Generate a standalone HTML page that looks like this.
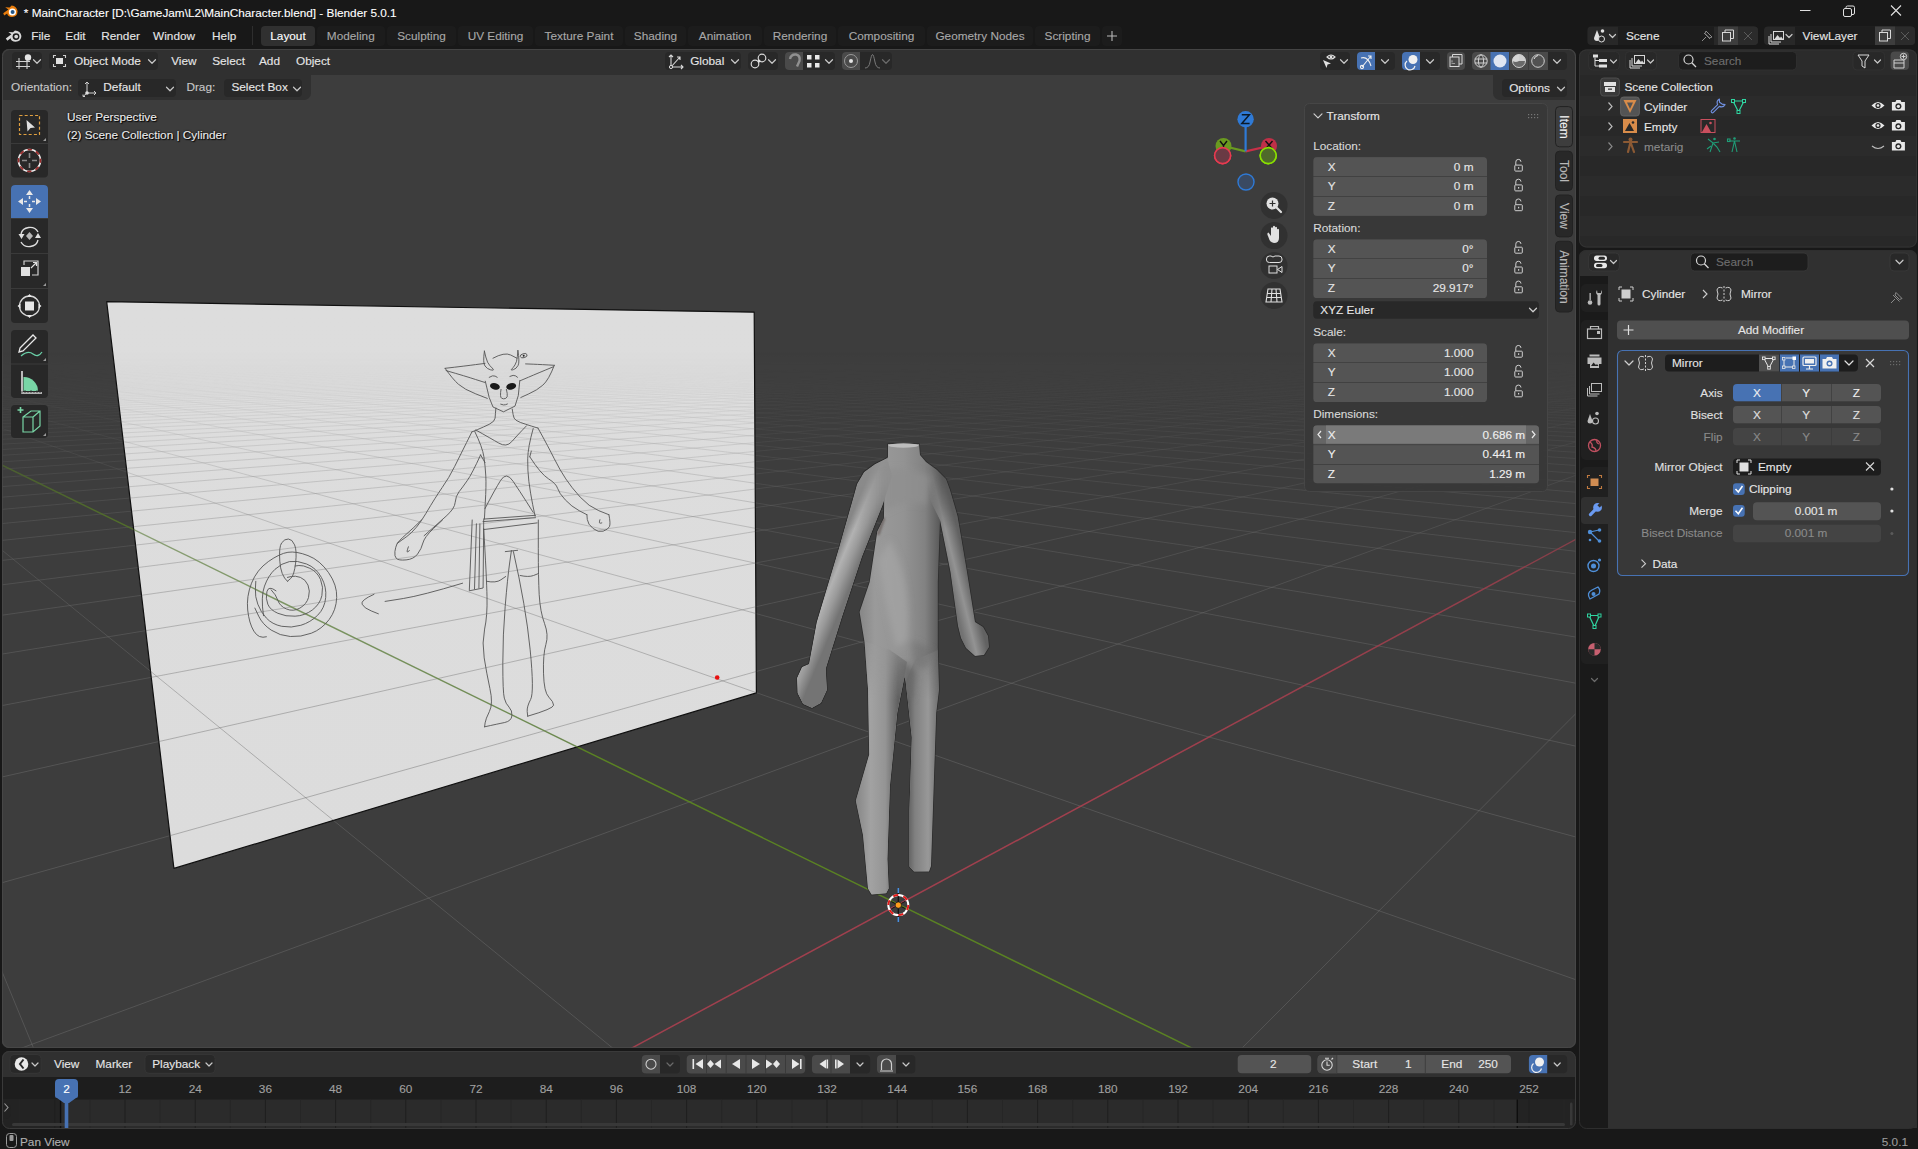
<!DOCTYPE html><html><head><meta charset="utf-8"><style>
*{margin:0;padding:0;box-sizing:border-box}
html,body{width:1918px;height:1149px;overflow:hidden;background:#181818}
body{position:relative;font-family:"Liberation Sans", sans-serif}
div,span,svg{position:absolute}
.t{white-space:pre;line-height:1;-webkit-text-stroke:0.12px currentColor}
.tc{text-align:center}
</style></head><body><div style="left:0px;top:0px;width:1918px;height:24px;background:#181818;"></div>
<svg style="left:2px;top:4px;" width="17" height="14" viewBox="0 0 17 14">
      <path d="M1.2 9.2 L6.4 5.4 L3.2 3.2 L7.6 3.4 L9.6 1.6 Q14.6 2.2 15.6 7.2 Q15.4 12.6 10 13 Q5.6 12.8 5.2 9.4 L2.2 11.6 Z" fill="#e87d0d"/>
      <circle cx="10.4" cy="8" r="3.6" fill="#fff"/>
      <circle cx="10.6" cy="8" r="2" fill="#265787"/></svg>
<span class="t" style="left:23.8px;top:6.7px;font-size:11.77px;color:#ffffff;">* MainCharacter [D:\GameJam\L2\MainCharacter.blend] - Blender 5.0.1</span>
<svg style="left:1796px;top:4px;" width="16" height="16" viewBox="0 0 16 16"><path d="M4 6.5 H14.5" stroke="#e0e0e0" stroke-width="1"/></svg>
<svg style="left:1841px;top:3px;" width="16" height="16" viewBox="0 0 16 16"><rect x="2.5" y="5.5" width="8" height="8" rx="1.5" fill="none" stroke="#e0e0e0" stroke-width="1"/><path d="M5 5.5 V4.5 Q5 3 6.5 3 H12 Q13.5 3 13.5 4.5 V10 Q13.5 11.5 12 11.5 H10.5" fill="none" stroke="#e0e0e0" stroke-width="1"/></svg>
<svg style="left:1887px;top:3px;" width="16" height="16" viewBox="0 0 16 16"><path d="M4 2.5 L14 12.5 M14 2.5 L4 12.5" stroke="#e0e0e0" stroke-width="1.1"/></svg>
<div style="left:0px;top:24px;width:1918px;height:25px;background:#181818;"></div>
<svg style="left:5px;top:28px;" width="18" height="15" viewBox="0 0 18 15">
      <path d="M0.8 10.4 L6.4 6.2 L3.4 4 L8 4.2 L10 2.4 Q15.6 2.8 16.4 8 Q16.2 13.4 10.6 13.8 Q6 13.6 5.6 10.2 L2.4 12.8 Z" fill="#d8d8d8"/>
      <circle cx="11" cy="8.6" r="3.4" fill="#181818"/>
      <circle cx="11.2" cy="8.6" r="1.9" fill="#d8d8d8"/></svg>
<span class="t" style="left:31.3px;top:31.0px;font-size:11.8px;color:#e6e6e6;">File</span>
<span class="t" style="left:65.3px;top:31.0px;font-size:11.8px;color:#e6e6e6;">Edit</span>
<span class="t" style="left:101.2px;top:31.0px;font-size:11.8px;color:#e6e6e6;">Render</span>
<span class="t" style="left:153.1px;top:31.0px;font-size:11.8px;color:#e6e6e6;">Window</span>
<span class="t" style="left:212.1px;top:31.0px;font-size:11.8px;color:#e6e6e6;">Help</span>
<div style="left:252px;top:26px;width:1px;height:19px;background:#2e2e2e;"></div>
<div style="left:261px;top:26px;width:54px;height:20px;background:#303030;border-radius:4px;"></div>
<span class="t tc" style="left:-12.0px;width:600px;top:31.0px;font-size:11.8px;color:#ffffff;">Layout</span>
<div style="left:316.5px;top:26px;width:68.5px;height:20px;background:#1c1c1c;border-radius:4px;"></div>
<span class="t tc" style="left:50.8px;width:600px;top:31.0px;font-size:11.8px;color:#a8a8a8;">Modeling</span>
<div style="left:387px;top:26px;width:69px;height:20px;background:#1c1c1c;border-radius:4px;"></div>
<span class="t tc" style="left:121.5px;width:600px;top:31.0px;font-size:11.8px;color:#a8a8a8;">Sculpting</span>
<div style="left:458px;top:26px;width:75px;height:20px;background:#1c1c1c;border-radius:4px;"></div>
<span class="t tc" style="left:195.5px;width:600px;top:31.0px;font-size:11.8px;color:#a8a8a8;">UV Editing</span>
<div style="left:535px;top:26px;width:88px;height:20px;background:#1c1c1c;border-radius:4px;"></div>
<span class="t tc" style="left:279.0px;width:600px;top:31.0px;font-size:11.8px;color:#a8a8a8;">Texture Paint</span>
<div style="left:625px;top:26px;width:61px;height:20px;background:#1c1c1c;border-radius:4px;"></div>
<span class="t tc" style="left:355.5px;width:600px;top:31.0px;font-size:11.8px;color:#a8a8a8;">Shading</span>
<div style="left:688px;top:26px;width:74px;height:20px;background:#1c1c1c;border-radius:4px;"></div>
<span class="t tc" style="left:425.0px;width:600px;top:31.0px;font-size:11.8px;color:#a8a8a8;">Animation</span>
<div style="left:764px;top:26px;width:72px;height:20px;background:#1c1c1c;border-radius:4px;"></div>
<span class="t tc" style="left:500.0px;width:600px;top:31.0px;font-size:11.8px;color:#a8a8a8;">Rendering</span>
<div style="left:838px;top:26px;width:87px;height:20px;background:#1c1c1c;border-radius:4px;"></div>
<span class="t tc" style="left:581.5px;width:600px;top:31.0px;font-size:11.8px;color:#a8a8a8;">Compositing</span>
<div style="left:927px;top:26px;width:106px;height:20px;background:#1c1c1c;border-radius:4px;"></div>
<span class="t tc" style="left:680.0px;width:600px;top:31.0px;font-size:11.8px;color:#a8a8a8;">Geometry Nodes</span>
<div style="left:1035px;top:26px;width:65px;height:20px;background:#1c1c1c;border-radius:4px;"></div>
<span class="t tc" style="left:767.5px;width:600px;top:31.0px;font-size:11.8px;color:#a8a8a8;">Scripting</span>
<div style="left:1102px;top:26px;width:20px;height:20px;background:#1c1c1c;border-radius:4px;"></div>
<svg style="left:1106px;top:30px;" width="12" height="12" viewBox="0 0 12 12"><path d="M6 1 V11 M1 6 H11" stroke="#b8b8b8" stroke-width="1.1"/></svg>
<div style="left:2px;top:49px;width:1573px;height:999px;background:#3d3d3d;border-radius:7px;overflow:hidden"></div>
<svg style="left:2px;top:49px;" width="1574" height="999" viewBox="0 0 1574 999">
    <defs>
      <clipPath id="vclip"><rect x="0" y="0" width="1574" height="999" rx="7"/></clipPath>
      <linearGradient id="gfade" gradientUnits="userSpaceOnUse" x1="0" y1="287.7" x2="0" y2="999">
<stop offset="0.0000" stop-color="#fff" stop-opacity="0"/><stop offset="0.0197" stop-color="#fff" stop-opacity="0.0"/><stop offset="0.0422" stop-color="#fff" stop-opacity="0.02"/><stop offset="0.0633" stop-color="#fff" stop-opacity="0.06"/><stop offset="0.0844" stop-color="#fff" stop-opacity="0.14"/><stop offset="0.1265" stop-color="#fff" stop-opacity="0.3"/><stop offset="0.1687" stop-color="#fff" stop-opacity="0.45"/><stop offset="0.2531" stop-color="#fff" stop-opacity="0.68"/><stop offset="0.3655" stop-color="#fff" stop-opacity="0.85"/><stop offset="0.5905" stop-color="#fff" stop-opacity="1"/><stop offset="1.0000" stop-color="#fff" stop-opacity="1"/>
      </linearGradient>
      <mask id="gmask" maskUnits="userSpaceOnUse" x="0" y="0" width="1574" height="999"><rect x="0" y="0" width="1574" height="999" fill="url(#gfade)"/></mask>
      <linearGradient id="plg" x1="0" y1="0" x2="0" y2="1"><stop offset="0" stop-color="#dddddd"/><stop offset="1" stop-color="#dcdcdc"/></linearGradient>
    </defs>
    <g clip-path="url(#vclip)">
      <rect width="1574" height="999" fill="#3d3d3d"/>
      <g mask="url(#gmask)">
        <path id="gridp" d="M-740773.7 6454.3L-25735.3 499.8M-735753.1 6454.3L-23730.0 484.5M-730732.4 6454.3L-21995.6 471.2M-725711.8 6454.3L-20480.6 459.6M-720691.1 6454.3L-19146.0 449.4M762713.6 6454.3L344198.8 3061.9M-715670.5 6454.3L-17961.2 440.3M757424.5 6454.3L165676.9 1624.1M-710649.9 6454.3L-16902.4 432.2M752135.4 6454.3L109033.1 1167.9M-705629.2 6454.3L-15950.6 424.9M746846.3 6454.3L81219.3 943.9M-700608.6 6454.3L-15090.2 418.3M741557.2 6454.3L64690.0 810.8M-695587.9 6454.3L-14308.8 412.3M736268.1 6454.3L53736.0 722.6M-690567.3 6454.3L-13595.9 406.8M730979.1 6454.3L45943.6 659.8M-685546.7 6454.3L-12942.8 401.8M725690.0 6454.3L40116.6 612.9M-680526.0 6454.3L-12342.5 397.2M720400.9 6454.3L35594.7 576.5M-675505.4 6454.3L-11788.6 393.0M715111.8 6454.3L31983.6 547.4M-670484.7 6454.3L-11276.1 389.1M709822.7 6454.3L29033.3 523.7M-665464.1 6454.3L-10800.5 385.4M704533.6 6454.3L26577.6 503.9M-660443.5 6454.3L-10357.8 382.0M699244.5 6454.3L24501.8 487.2M-655422.8 6454.3L-9944.9 378.9M693955.4 6454.3L22724.0 472.8M-650402.2 6454.3L-9558.8 375.9M688666.4 6454.3L21184.4 460.4M-645381.5 6454.3L-9196.9 373.1M683377.3 6454.3L19838.1 449.6M-640360.9 6454.3L-8857.2 370.5M678088.2 6454.3L18650.8 440.0M-635340.3 6454.3L-8537.5 368.1M672799.1 6454.3L17596.0 431.5M-630319.6 6454.3L-8236.2 365.8M667510.0 6454.3L16652.6 423.9M-625299.0 6454.3L-7951.7 363.6M662220.9 6454.3L15803.9 417.1M-620278.4 6454.3L-7682.7 361.5M656931.8 6454.3L15036.3 410.9M-615257.7 6454.3L-7427.9 359.6M651642.8 6454.3L14338.7 405.3M-610237.1 6454.3L-7186.2 357.7M646353.7 6454.3L13701.9 400.2M-605216.4 6454.3L-6956.7 356.0M641064.6 6454.3L13118.4 395.5M-600195.8 6454.3L-6738.4 354.3M635775.5 6454.3L12581.6 391.2M-595175.2 6454.3L-6530.6 352.7M630486.4 6454.3L12086.3 387.2M-590154.5 6454.3L-6332.5 351.2M625197.3 6454.3L11627.8 383.5M-585133.9 6454.3L-6143.4 349.7M619908.2 6454.3L11202.1 380.0M-580113.2 6454.3L-5962.8 348.3M614619.1 6454.3L10805.8 376.9M-575092.6 6454.3L-5790.1 347.0M609330.1 6454.3L10436.0 373.9M-570072.0 6454.3L-5624.7 345.8M604041.0 6454.3L10090.2 371.1M-565051.3 6454.3L-5466.3 344.5M598751.9 6454.3L9765.9 368.5M-560030.7 6454.3L-5314.3 343.4M593462.8 6454.3L9461.4 366.0M-555010.0 6454.3L-5168.4 342.3M588173.7 6454.3L9174.8 363.7M-549989.4 6454.3L-5028.3 341.2M582884.6 6454.3L8904.7 361.5M-544968.8 6454.3L-4893.6 340.2M577595.5 6454.3L8649.6 359.5M-539948.1 6454.3L-4764.0 339.2M572306.4 6454.3L8408.3 357.5M-534927.5 6454.3L-4639.3 338.2M567017.4 6454.3L8179.7 355.7M-529906.8 6454.3L-4519.0 337.3M561728.3 6454.3L7962.8 354.0M-524886.2 6454.3L-4403.1 336.4M556439.2 6454.3L7756.8 352.3M-519865.6 6454.3L-4291.3 335.5M551150.1 6454.3L7560.9 350.7M-514844.9 6454.3L-4183.3 334.7M545861.0 6454.3L7374.4 349.2M-509824.3 6454.3L-4079.0 333.9M540571.9 6454.3L7196.5 347.8M-504803.6 6454.3L-3978.2 333.1M535282.8 6454.3L7026.7 346.4M-499783.0 6454.3L-3880.7 332.4M529993.7 6454.3L6864.5 345.1M-494762.4 6454.3L-3786.4 331.7M524704.7 6454.3L6709.3 343.9M-489741.7 6454.3L-3695.0 331.0M519415.6 6454.3L6560.8 342.7M-484721.1 6454.3L-3606.6 330.3M514126.5 6454.3L6418.4 341.5M-479700.4 6454.3L-3520.8 329.6M508837.4 6454.3L6281.9 340.4M-474679.8 6454.3L-3437.7 329.0M503548.3 6454.3L6150.9 339.4M-469659.2 6454.3L-3357.1 328.4M498259.2 6454.3L6024.9 338.3M-464638.5 6454.3L-3278.8 327.8M492970.1 6454.3L5903.9 337.4M-459617.9 6454.3L-3202.8 327.2M487681.0 6454.3L5787.4 336.4M-454597.2 6454.3L-3129.0 326.6M482392.0 6454.3L5675.2 335.5M-449576.6 6454.3L-3057.3 326.1M477102.9 6454.3L5567.1 334.7M-444556.0 6454.3L-2987.5 325.5M471813.8 6454.3L5462.9 333.8M-439535.3 6454.3L-2919.7 325.0M466524.7 6454.3L5362.4 333.0M-434514.7 6454.3L-2853.7 324.5M461235.6 6454.3L5265.3 332.2M-429494.0 6454.3L-2789.5 324.0M455946.5 6454.3L5171.5 331.5M-424473.4 6454.3L-2727.0 323.6M450657.4 6454.3L5080.8 330.7M-419452.8 6454.3L-2666.1 323.1M445368.4 6454.3L4993.1 330.0M-414432.1 6454.3L-2606.8 322.6M440079.3 6454.3L4908.3 329.4M-409411.5 6454.3L-2548.9 322.2M434790.2 6454.3L4826.1 328.7M-404390.9 6454.3L-2492.6 321.8M429501.1 6454.3L4746.5 328.1M-399370.2 6454.3L-2437.6 321.3M424212.0 6454.3L4669.4 327.4M-394349.6 6454.3L-2384.0 320.9M418922.9 6454.3L4594.6 326.8M-389328.9 6454.3L-2331.6 320.5M413633.8 6454.3L4522.0 326.2M-384308.3 6454.3L-2280.5 320.1M408344.7 6454.3L4451.6 325.7M-379287.7 6454.3L-2230.7 319.7M403055.7 6454.3L4383.2 325.1M-374267.0 6454.3L-2181.9 319.4M397766.6 6454.3L4316.8 324.6M-369246.4 6454.3L-2134.3 319.0M392477.5 6454.3L4252.3 324.1M-364225.7 6454.3L-2087.8 318.7M387188.4 6454.3L4189.5 323.6M-359205.1 6454.3L-2042.4 318.3M381899.3 6454.3L4128.5 323.1M-354184.5 6454.3L-1997.9 318.0M376610.2 6454.3L4069.1 322.6M-349163.8 6454.3L-1954.4 317.6M371321.1 6454.3L4011.3 322.1M-344143.2 6454.3L-1911.9 317.3M366032.0 6454.3L3955.0 321.7M-339122.5 6454.3L-1870.3 317.0M360743.0 6454.3L3900.2 321.2M-334101.9 6454.3L-1829.6 316.7M355453.9 6454.3L3846.8 320.8M-329081.3 6454.3L-1789.7 316.4M350164.8 6454.3L3794.7 320.4M-324060.6 6454.3L-1750.7 316.1M344875.7 6454.3L3744.0 320.0M-319040.0 6454.3L-1712.4 315.8M339586.6 6454.3L3694.5 319.6M-314019.3 6454.3L-1675.0 315.5M334297.5 6454.3L3646.2 319.2M-308998.7 6454.3L-1638.3 315.2M329008.4 6454.3L3599.1 318.8M-303978.1 6454.3L-1602.4 314.9M323719.3 6454.3L3553.1 318.4M-298957.4 6454.3L-1567.1 314.7M318430.3 6454.3L3508.2 318.1M-293936.8 6454.3L-1532.6 314.4M313141.2 6454.3L3464.3 317.7M-288916.1 6454.3L-1498.7 314.1M307852.1 6454.3L3421.4 317.4M-283895.5 6454.3L-1465.5 313.9M302563.0 6454.3L3379.5 317.0M-278874.9 6454.3L-1432.9 313.6M297273.9 6454.3L3338.6 316.7M-273854.2 6454.3L-1400.9 313.4M291984.8 6454.3L3298.5 316.4M-268833.6 6454.3L-1369.5 313.1M286695.7 6454.3L3259.4 316.1M-263812.9 6454.3L-1338.7 312.9M281406.6 6454.3L3221.1 315.8M-258792.3 6454.3L-1308.5 312.7M276117.6 6454.3L3183.6 315.5M-253771.7 6454.3L-1278.8 312.5M270828.5 6454.3L3146.9 315.2M-248751.0 6454.3L-1249.7 312.2M265539.4 6454.3L3111.0 314.9M-243730.4 6454.3L-1221.1 312.0M260250.3 6454.3L3075.9 314.6M-238709.7 6454.3L-1193.0 311.8M254961.2 6454.3L3041.4 314.3M-233689.1 6454.3L-1165.4 311.6M249672.1 6454.3L3007.7 314.0M-228668.5 6454.3L-1138.2 311.4M244383.0 6454.3L2974.6 313.8M-223647.8 6454.3L-1111.6 311.2M239094.0 6454.3L2942.3 313.5M-218627.2 6454.3L-1085.4 311.0M233804.9 6454.3L2910.5 313.3M-213606.6 6454.3L-1059.6 310.8M228515.8 6454.3L2879.4 313.0M-208585.9 6454.3L-1034.3 310.6M223226.7 6454.3L2848.9 312.8M-203565.3 6454.3L-1009.4 310.4M217937.6 6454.3L2818.9 312.5M-198544.6 6454.3L-984.9 310.2M212648.5 6454.3L2789.6 312.3M-193524.0 6454.3L-960.8 310.0M207359.4 6454.3L2760.8 312.1M-188503.4 6454.3L-937.1 309.8M202070.3 6454.3L2732.5 311.8M-183482.7 6454.3L-913.7 309.7M196781.3 6454.3L2704.8 311.6M-178462.1 6454.3L-890.8 309.5M191492.2 6454.3L2677.5 311.4M-173441.4 6454.3L-868.2 309.3M186203.1 6454.3L2650.8 311.2M-168420.8 6454.3L-846.0 309.1M180914.0 6454.3L2624.5 311.0M-163400.2 6454.3L-824.1 309.0M175624.9 6454.3L2598.8 310.8M-158379.5 6454.3L-802.6 308.8M170335.8 6454.3L2573.4 310.5M-153358.9 6454.3L-781.4 308.6M165046.7 6454.3L2548.5 310.3M-148338.2 6454.3L-760.5 308.5M159757.6 6454.3L2524.1 310.2M-143317.6 6454.3L-739.9 308.3M154468.6 6454.3L2500.1 310.0M-138297.0 6454.3L-719.7 308.2M149179.5 6454.3L2476.4 309.8M-133276.3 6454.3L-699.7 308.0M143890.4 6454.3L2453.2 309.6M-128255.7 6454.3L-680.1 307.9M138601.3 6454.3L2430.4 309.4M-123235.0 6454.3L-660.7 307.7M133312.2 6454.3L2407.9 309.2M-118214.4 6454.3L-641.6 307.6M128023.1 6454.3L2385.9 309.0M-113193.8 6454.3L-622.8 307.4M122734.0 6454.3L2364.1 308.9M-108173.1 6454.3L-604.3 307.3M117444.9 6454.3L2342.8 308.7M-103152.5 6454.3L-586.0 307.1M112155.9 6454.3L2321.8 308.5M-98131.8 6454.3L-568.0 307.0M106866.8 6454.3L2301.1 308.4M-93111.2 6454.3L-550.2 306.9M101577.7 6454.3L2280.7 308.2M-88090.6 6454.3L-532.7 306.7M96288.6 6454.3L2260.7 308.0M-83069.9 6454.3L-515.5 306.6M90999.5 6454.3L2241.0 307.9M-78049.3 6454.3L-498.4 306.5M85710.4 6454.3L2221.6 307.7M-73028.6 6454.3L-481.7 306.3M80421.3 6454.3L2202.5 307.6M-68008.0 6454.3L-465.1 306.2M75132.2 6454.3L2183.6 307.4M-62987.4 6454.3L-448.8 306.1M69843.2 6454.3L2165.1 307.3M-57966.7 6454.3L-432.6 306.0M64554.1 6454.3L2146.8 307.1M-52946.1 6454.3L-416.7 305.8M59265.0 6454.3L2128.9 307.0M-47925.4 6454.3L-401.0 305.7M53975.9 6454.3L2111.1 306.8M-42904.8 6454.3L-385.6 305.6M48686.8 6454.3L2093.7 306.7M-37884.2 6454.3L-370.3 305.5M43397.7 6454.3L2076.5 306.5M-32863.5 6454.3L-355.2 305.4M38108.6 6454.3L2059.5 306.4M-27842.9 6454.3L-340.3 305.3M32819.5 6454.3L2042.8 306.3M-22822.3 6454.3L-325.6 305.2M27530.5 6454.3L2026.4 306.1M-17801.6 6454.3L-311.1 305.0M22241.4 6454.3L2010.1 306.0M-12781.0 6454.3L-296.8 304.9M16952.3 6454.3L1994.1 305.9M-7760.3 6454.3L-282.6 304.8M11663.2 6454.3L1978.3 305.8M-2739.7 6454.3L-268.6 304.7M6374.1 6454.3L1962.8 305.6M2280.9 6454.3L-254.8 304.6M1085.0 6454.3L1947.4 305.5M7301.6 6454.3L-241.2 304.5M-4204.1 6454.3L1932.3 305.4M17342.9 6454.3L-214.5 304.3M-14782.2 6454.3L1902.6 305.1M22363.5 6454.3L-201.3 304.2M-20071.3 6454.3L1888.1 305.0M27384.1 6454.3L-188.4 304.1M-25360.4 6454.3L1873.7 304.9M32404.8 6454.3L-175.5 304.0M-30649.5 6454.3L1859.6 304.8M37425.4 6454.3L-162.9 303.9M-35938.6 6454.3L1845.6 304.7M42446.1 6454.3L-150.4 303.8M-41227.7 6454.3L1831.8 304.6M47466.7 6454.3L-138.0 303.7M-46516.8 6454.3L1818.2 304.5M52487.3 6454.3L-125.8 303.6M-51805.8 6454.3L1804.8 304.4M57508.0 6454.3L-113.7 303.5M-57094.9 6454.3L1791.6 304.3M62528.6 6454.3L-101.7 303.4M-62384.0 6454.3L1778.5 304.1M67549.3 6454.3L-89.9 303.3M-67673.1 6454.3L1765.6 304.0M72569.9 6454.3L-78.3 303.3M-72962.2 6454.3L1752.8 303.9M77590.5 6454.3L-66.7 303.2M-78251.3 6454.3L1740.2 303.8M82611.2 6454.3L-55.3 303.1M-83540.4 6454.3L1727.8 303.7M87631.8 6454.3L-44.0 303.0M-88829.5 6454.3L1715.5 303.6M92652.5 6454.3L-32.9 302.9M-94118.5 6454.3L1703.3 303.5M97673.1 6454.3L-21.9 302.8M-99407.6 6454.3L1691.4 303.4M102693.7 6454.3L-11.0 302.7M-104696.7 6454.3L1679.5 303.4M107714.4 6454.3L-0.2 302.7M-109985.8 6454.3L1667.8 303.3M112735.0 6454.3L10.5 302.6M-115274.9 6454.3L1656.3 303.2M117755.7 6454.3L21.0 302.5M-120564.0 6454.3L1644.8 303.1M122776.3 6454.3L31.5 302.4M-125853.1 6454.3L1633.5 303.0M127796.9 6454.3L41.8 302.3M-131142.2 6454.3L1622.4 302.9M132817.6 6454.3L52.0 302.3M-136431.2 6454.3L1611.4 302.8M137838.2 6454.3L62.1 302.2M-141720.3 6454.3L1600.5 302.7M142858.9 6454.3L72.1 302.1M-147009.4 6454.3L1589.7 302.6M147879.5 6454.3L82.0 302.0M-152298.5 6454.3L1579.1 302.5M152900.1 6454.3L91.8 302.0M-157587.6 6454.3L1568.5 302.5M157920.8 6454.3L101.5 301.9M-162876.7 6454.3L1558.1 302.4M162941.4 6454.3L111.1 301.8M-168165.8 6454.3L1547.8 302.3M167962.1 6454.3L120.6 301.7M-173454.9 6454.3L1537.7 302.2M172982.7 6454.3L130.0 301.7M-178743.9 6454.3L1527.6 302.1M178003.3 6454.3L139.3 301.6M-184033.0 6454.3L1517.7 302.0M183024.0 6454.3L148.5 301.5M-189322.1 6454.3L1507.8 302.0M188044.6 6454.3L157.6 301.4M-194611.2 6454.3L1498.1 301.9M193065.2 6454.3L166.6 301.4M-199900.3 6454.3L1488.5 301.8M198085.9 6454.3L175.5 301.3M-205189.4 6454.3L1479.0 301.7M203106.5 6454.3L184.3 301.2M-210478.5 6454.3L1469.6 301.7M208127.2 6454.3L193.1 301.2M-215767.5 6454.3L1460.2 301.6M213147.8 6454.3L201.8 301.1M-221056.6 6454.3L1451.0 301.5M218168.4 6454.3L210.3 301.0M-226345.7 6454.3L1441.9 301.4M223189.1 6454.3L218.8 301.0M-231634.8 6454.3L1432.9 301.4M228209.7 6454.3L227.2 300.9M-236923.9 6454.3L1424.0 301.3M233230.4 6454.3L235.6 300.9M-242213.0 6454.3L1415.2 301.2M238251.0 6454.3L243.8 300.8M-247502.1 6454.3L1406.4 301.2M243271.6 6454.3L252.0 300.7M-252791.2 6454.3L1397.8 301.1M248292.3 6454.3L260.1 300.7M-258080.2 6454.3L1389.2 301.0M253312.9 6454.3L268.1 300.6M-263369.3 6454.3L1380.7 300.9M258333.6 6454.3L276.0 300.5M-268658.4 6454.3L1372.4 300.9M263354.2 6454.3L283.9 300.5M-273947.5 6454.3L1364.1 300.8M268374.8 6454.3L291.7 300.4M-279236.6 6454.3L1355.8 300.7M273395.5 6454.3L299.4 300.4M-284525.7 6454.3L1347.7 300.7M278416.1 6454.3L307.1 300.3M-289814.8 6454.3L1339.7 300.6M283436.8 6454.3L314.6 300.2M-295103.9 6454.3L1331.7 300.5M288457.4 6454.3L322.1 300.2M-300392.9 6454.3L1323.8 300.5M293478.0 6454.3L329.6 300.1M-305682.0 6454.3L1316.0 300.4M298498.7 6454.3L337.0 300.1M-310971.1 6454.3L1308.3 300.4M303519.3 6454.3L344.3 300.0M-316260.2 6454.3L1300.6 300.3M308540.0 6454.3L351.5 300.0M-321549.3 6454.3L1293.0 300.2M313560.6 6454.3L358.7 299.9M-326838.4 6454.3L1285.5 300.2M318581.2 6454.3L365.8 299.9M-332127.5 6454.3L1278.0 300.1M323601.9 6454.3L372.8 299.8M-337416.6 6454.3L1270.7 300.1M328622.5 6454.3L379.8 299.7M-342705.6 6454.3L1263.4 300.0M333643.2 6454.3L386.7 299.7M-347994.7 6454.3L1256.1 299.9M338663.8 6454.3L393.6 299.6M-353283.8 6454.3L1249.0 299.9M343684.4 6454.3L400.4 299.6M-358572.9 6454.3L1241.9 299.8M348705.1 6454.3L407.1 299.5M-363862.0 6454.3L1234.9 299.8M353725.7 6454.3L413.8 299.5M-369151.1 6454.3L1227.9 299.7M358746.4 6454.3L420.5 299.4M-374440.2 6454.3L1221.0 299.7M363767.0 6454.3L427.0 299.4M-379729.3 6454.3L1214.2 299.6M368787.6 6454.3L433.5 299.3M-385018.3 6454.3L1207.4 299.5M373808.3 6454.3L440.0 299.3M-390307.4 6454.3L1200.7 299.5M378828.9 6454.3L446.4 299.2M-395596.5 6454.3L1194.0 299.4M383849.5 6454.3L452.7 299.2M-400885.6 6454.3L1187.4 299.4M388870.2 6454.3L459.0 299.1M-406174.7 6454.3L1180.9 299.3M393890.8 6454.3L465.3 299.1M-411463.8 6454.3L1174.4 299.3M398911.5 6454.3L471.5 299.0M-416752.9 6454.3L1168.0 299.2M403932.1 6454.3L477.6 299.0M-422042.0 6454.3L1161.7 299.2M408952.7 6454.3L483.7 298.9M-427331.0 6454.3L1155.4 299.1M413973.4 6454.3L489.7 298.9M-432620.1 6454.3L1149.1 299.1M418994.0 6454.3L495.7 298.9M-437909.2 6454.3L1142.9 299.0M424014.7 6454.3L501.7 298.8M-443198.3 6454.3L1136.8 299.0M429035.3 6454.3L507.6 298.8M-448487.4 6454.3L1130.7 298.9M434055.9 6454.3L513.4 298.7M-453776.5 6454.3L1124.7 298.9M439076.6 6454.3L519.2 298.7M-459065.6 6454.3L1118.7 298.8M444097.2 6454.3L525.0 298.6M-464354.6 6454.3L1112.8 298.8M449117.9 6454.3L530.7 298.6M-469643.7 6454.3L1106.9 298.7M454138.5 6454.3L536.3 298.5M-474932.8 6454.3L1101.1 298.7M459159.1 6454.3L541.9 298.5M-480221.9 6454.3L1095.3 298.6M464179.8 6454.3L547.5 298.5M-485511.0 6454.3L1089.6 298.6M469200.4 6454.3L553.0 298.4M-490800.1 6454.3L1083.9 298.6M474221.1 6454.3L558.5 298.4M-496089.2 6454.3L1078.3 298.5M479241.7 6454.3L563.9 298.3M-501378.3 6454.3L1072.7 298.5M484262.3 6454.3L569.3 298.3M-506667.3 6454.3L1067.1 298.4M489283.0 6454.3L574.7 298.3M-511956.4 6454.3L1061.6 298.4M494303.6 6454.3L580.0 298.2M-517245.5 6454.3L1056.2 298.3M499324.3 6454.3L585.3 298.2M-522534.6 6454.3L1050.8 298.3M504344.9 6454.3L590.5 298.1M-527823.7 6454.3L1045.4 298.2M509365.5 6454.3L595.7 298.1M-533112.8 6454.3L1040.1 298.2M514386.2 6454.3L600.9 298.1M-538401.9 6454.3L1034.8 298.2M519406.8 6454.3L606.0 298.0M-543691.0 6454.3L1029.6 298.1M524427.5 6454.3L611.1 298.0M-548980.0 6454.3L1024.4 298.1M529448.1 6454.3L616.1 297.9M-554269.1 6454.3L1019.3 298.0M534468.7 6454.3L621.1 297.9M-559558.2 6454.3L1014.2 298.0M539489.4 6454.3L626.1 297.9M-564847.3 6454.3L1009.1 298.0M544510.0 6454.3L631.0 297.8M-570136.4 6454.3L1004.1 297.9M549530.7 6454.3L635.9 297.8M-575425.5 6454.3L999.1 297.9M554551.3 6454.3L640.7 297.7M-580714.6 6454.3L994.2 297.8M559571.9 6454.3L645.5 297.7M-586003.7 6454.3L989.2 297.8M564592.6 6454.3L650.3 297.7M-591292.7 6454.3L984.4 297.8M569613.2 6454.3L655.1 297.6M-596581.8 6454.3L979.5 297.7M574633.8 6454.3L659.8 297.6M-601870.9 6454.3L974.7 297.7M579654.5 6454.3L664.5 297.6M-607160.0 6454.3L970.0 297.6M584675.1 6454.3L669.1 297.5M-612449.1 6454.3L965.3 297.6M589695.8 6454.3L673.7 297.5M-617738.2 6454.3L960.6 297.6M594716.4 6454.3L678.3 297.5M-623027.3 6454.3L955.9 297.5M599737.0 6454.3L682.8 297.4M-628316.4 6454.3L951.3 297.5M604757.7 6454.3L687.3 297.4M-633605.4 6454.3L946.7 297.4M609778.3 6454.3L691.8 297.4M-638894.5 6454.3L942.2 297.4M614799.0 6454.3L696.3 297.3M-644183.6 6454.3L937.7 297.4M619819.6 6454.3L700.7 297.3M-649472.7 6454.3L933.2 297.3M624840.2 6454.3L705.1 297.3M-654761.8 6454.3L928.8 297.3M629860.9 6454.3L709.4 297.2M-660050.9 6454.3L924.4 297.3M634881.5 6454.3L713.8 297.2M-665340.0 6454.3L920.0 297.2M639902.2 6454.3L718.0 297.2M-670629.0 6454.3L915.6 297.2M644922.8 6454.3L722.3 297.1M-675918.1 6454.3L911.3 297.2M649943.4 6454.3L726.5 297.1M-681207.2 6454.3L907.0 297.1M654964.1 6454.3L730.8 297.1M-686496.3 6454.3L902.8 297.1M659984.7 6454.3L734.9 297.0M-691785.4 6454.3L898.6 297.1M665005.4 6454.3L739.1 297.0M-697074.5 6454.3L894.4 297.0M670026.0 6454.3L743.2 297.0M-702363.6 6454.3L890.2 297.0M675046.6 6454.3L747.3 296.9M-707652.7 6454.3L886.1 297.0M680067.3 6454.3L751.4 296.9M-712941.7 6454.3L882.0 296.9M685087.9 6454.3L755.4 296.9M-718230.8 6454.3L877.9 296.9M690108.6 6454.3L759.4 296.8M-723519.9 6454.3L873.9 296.9M695129.2 6454.3L763.4 296.8M-728809.0 6454.3L869.9 296.8M700149.8 6454.3L767.4 296.8M-734098.1 6454.3L865.9 296.8M705170.5 6454.3L771.3 296.7M-739387.2 6454.3L861.9 296.8M710191.1 6454.3L775.2 296.7M-268126.4 2518.3L858.0 296.7M715211.8 6454.3L779.1 296.7M-143886.1 1483.7L854.1 296.7M720232.4 6454.3L782.9 296.7M-98378.0 1104.8L850.2 296.7M725253.0 6454.3L786.8 296.6M-74769.8 908.2L846.4 296.6M730273.7 6454.3L790.6 296.6M-60319.1 787.8L842.5 296.6M735294.3 6454.3L794.3 296.6M-50563.2 706.6L838.7 296.6M740315.0 6454.3L798.1 296.5M-43534.0 648.1L835.0 296.5M745335.6 6454.3L801.8 296.5M-38228.4 603.9L831.2 296.5M750356.2 6454.3L805.5 296.5M-34081.8 569.4L827.5 296.5M755376.9 6454.3L809.2 296.5M-30751.8 541.6L823.8 296.5M760397.5 6454.3L812.9 296.4M-28018.7 518.9L820.1 296.4M765418.2 6454.3L816.5 296.4M-25735.3 499.8L816.5 296.4" stroke="#808080" stroke-opacity="0.35" stroke-width="1" fill="none"/>
        <path d="M-9493.1 6454.3L1872.1 329.6" stroke="#a8404f" stroke-opacity="0.92" stroke-width="1.5"/>
        <path id="gaxis" d="M12322.2 6454.3L-180.3 327.7" stroke="#5f8e1e" stroke-opacity="0.85" stroke-width="1.5"/>
      </g>
      <polygon points="104.7,252.7 752.2,263.2 754.4,643.9 171.9,819.4" fill="url(#plg)" stroke="#101010" stroke-width="1.2" stroke-linejoin="round"/>
      <clipPath id="plclip"><polygon points="104.7,252.7 752.2,263.2 754.4,643.9 171.9,819.4"/></clipPath>
      <g mask="url(#gmask)"><g clip-path="url(#plclip)">
        <path d="M-740773.7 6454.3L-25735.3 499.8M-735753.1 6454.3L-23730.0 484.5M-730732.4 6454.3L-21995.6 471.2M-725711.8 6454.3L-20480.6 459.6M-720691.1 6454.3L-19146.0 449.4M762713.6 6454.3L344198.8 3061.9M-715670.5 6454.3L-17961.2 440.3M757424.5 6454.3L165676.9 1624.1M-710649.9 6454.3L-16902.4 432.2M752135.4 6454.3L109033.1 1167.9M-705629.2 6454.3L-15950.6 424.9M746846.3 6454.3L81219.3 943.9M-700608.6 6454.3L-15090.2 418.3M741557.2 6454.3L64690.0 810.8M-695587.9 6454.3L-14308.8 412.3M736268.1 6454.3L53736.0 722.6M-690567.3 6454.3L-13595.9 406.8M730979.1 6454.3L45943.6 659.8M-685546.7 6454.3L-12942.8 401.8M725690.0 6454.3L40116.6 612.9M-680526.0 6454.3L-12342.5 397.2M720400.9 6454.3L35594.7 576.5M-675505.4 6454.3L-11788.6 393.0M715111.8 6454.3L31983.6 547.4M-670484.7 6454.3L-11276.1 389.1M709822.7 6454.3L29033.3 523.7M-665464.1 6454.3L-10800.5 385.4M704533.6 6454.3L26577.6 503.9M-660443.5 6454.3L-10357.8 382.0M699244.5 6454.3L24501.8 487.2M-655422.8 6454.3L-9944.9 378.9M693955.4 6454.3L22724.0 472.8M-650402.2 6454.3L-9558.8 375.9M688666.4 6454.3L21184.4 460.4M-645381.5 6454.3L-9196.9 373.1M683377.3 6454.3L19838.1 449.6M-640360.9 6454.3L-8857.2 370.5M678088.2 6454.3L18650.8 440.0M-635340.3 6454.3L-8537.5 368.1M672799.1 6454.3L17596.0 431.5M-630319.6 6454.3L-8236.2 365.8M667510.0 6454.3L16652.6 423.9M-625299.0 6454.3L-7951.7 363.6M662220.9 6454.3L15803.9 417.1M-620278.4 6454.3L-7682.7 361.5M656931.8 6454.3L15036.3 410.9M-615257.7 6454.3L-7427.9 359.6M651642.8 6454.3L14338.7 405.3M-610237.1 6454.3L-7186.2 357.7M646353.7 6454.3L13701.9 400.2M-605216.4 6454.3L-6956.7 356.0M641064.6 6454.3L13118.4 395.5M-600195.8 6454.3L-6738.4 354.3M635775.5 6454.3L12581.6 391.2M-595175.2 6454.3L-6530.6 352.7M630486.4 6454.3L12086.3 387.2M-590154.5 6454.3L-6332.5 351.2M625197.3 6454.3L11627.8 383.5M-585133.9 6454.3L-6143.4 349.7M619908.2 6454.3L11202.1 380.0M-580113.2 6454.3L-5962.8 348.3M614619.1 6454.3L10805.8 376.9M-575092.6 6454.3L-5790.1 347.0M609330.1 6454.3L10436.0 373.9M-570072.0 6454.3L-5624.7 345.8M604041.0 6454.3L10090.2 371.1M-565051.3 6454.3L-5466.3 344.5M598751.9 6454.3L9765.9 368.5M-560030.7 6454.3L-5314.3 343.4M593462.8 6454.3L9461.4 366.0M-555010.0 6454.3L-5168.4 342.3M588173.7 6454.3L9174.8 363.7M-549989.4 6454.3L-5028.3 341.2M582884.6 6454.3L8904.7 361.5M-544968.8 6454.3L-4893.6 340.2M577595.5 6454.3L8649.6 359.5M-539948.1 6454.3L-4764.0 339.2M572306.4 6454.3L8408.3 357.5M-534927.5 6454.3L-4639.3 338.2M567017.4 6454.3L8179.7 355.7M-529906.8 6454.3L-4519.0 337.3M561728.3 6454.3L7962.8 354.0M-524886.2 6454.3L-4403.1 336.4M556439.2 6454.3L7756.8 352.3M-519865.6 6454.3L-4291.3 335.5M551150.1 6454.3L7560.9 350.7M-514844.9 6454.3L-4183.3 334.7M545861.0 6454.3L7374.4 349.2M-509824.3 6454.3L-4079.0 333.9M540571.9 6454.3L7196.5 347.8M-504803.6 6454.3L-3978.2 333.1M535282.8 6454.3L7026.7 346.4M-499783.0 6454.3L-3880.7 332.4M529993.7 6454.3L6864.5 345.1M-494762.4 6454.3L-3786.4 331.7M524704.7 6454.3L6709.3 343.9M-489741.7 6454.3L-3695.0 331.0M519415.6 6454.3L6560.8 342.7M-484721.1 6454.3L-3606.6 330.3M514126.5 6454.3L6418.4 341.5M-479700.4 6454.3L-3520.8 329.6M508837.4 6454.3L6281.9 340.4M-474679.8 6454.3L-3437.7 329.0M503548.3 6454.3L6150.9 339.4M-469659.2 6454.3L-3357.1 328.4M498259.2 6454.3L6024.9 338.3M-464638.5 6454.3L-3278.8 327.8M492970.1 6454.3L5903.9 337.4M-459617.9 6454.3L-3202.8 327.2M487681.0 6454.3L5787.4 336.4M-454597.2 6454.3L-3129.0 326.6M482392.0 6454.3L5675.2 335.5M-449576.6 6454.3L-3057.3 326.1M477102.9 6454.3L5567.1 334.7M-444556.0 6454.3L-2987.5 325.5M471813.8 6454.3L5462.9 333.8M-439535.3 6454.3L-2919.7 325.0M466524.7 6454.3L5362.4 333.0M-434514.7 6454.3L-2853.7 324.5M461235.6 6454.3L5265.3 332.2M-429494.0 6454.3L-2789.5 324.0M455946.5 6454.3L5171.5 331.5M-424473.4 6454.3L-2727.0 323.6M450657.4 6454.3L5080.8 330.7M-419452.8 6454.3L-2666.1 323.1M445368.4 6454.3L4993.1 330.0M-414432.1 6454.3L-2606.8 322.6M440079.3 6454.3L4908.3 329.4M-409411.5 6454.3L-2548.9 322.2M434790.2 6454.3L4826.1 328.7M-404390.9 6454.3L-2492.6 321.8M429501.1 6454.3L4746.5 328.1M-399370.2 6454.3L-2437.6 321.3M424212.0 6454.3L4669.4 327.4M-394349.6 6454.3L-2384.0 320.9M418922.9 6454.3L4594.6 326.8M-389328.9 6454.3L-2331.6 320.5M413633.8 6454.3L4522.0 326.2M-384308.3 6454.3L-2280.5 320.1M408344.7 6454.3L4451.6 325.7M-379287.7 6454.3L-2230.7 319.7M403055.7 6454.3L4383.2 325.1M-374267.0 6454.3L-2181.9 319.4M397766.6 6454.3L4316.8 324.6M-369246.4 6454.3L-2134.3 319.0M392477.5 6454.3L4252.3 324.1M-364225.7 6454.3L-2087.8 318.7M387188.4 6454.3L4189.5 323.6M-359205.1 6454.3L-2042.4 318.3M381899.3 6454.3L4128.5 323.1M-354184.5 6454.3L-1997.9 318.0M376610.2 6454.3L4069.1 322.6M-349163.8 6454.3L-1954.4 317.6M371321.1 6454.3L4011.3 322.1M-344143.2 6454.3L-1911.9 317.3M366032.0 6454.3L3955.0 321.7M-339122.5 6454.3L-1870.3 317.0M360743.0 6454.3L3900.2 321.2M-334101.9 6454.3L-1829.6 316.7M355453.9 6454.3L3846.8 320.8M-329081.3 6454.3L-1789.7 316.4M350164.8 6454.3L3794.7 320.4M-324060.6 6454.3L-1750.7 316.1M344875.7 6454.3L3744.0 320.0M-319040.0 6454.3L-1712.4 315.8M339586.6 6454.3L3694.5 319.6M-314019.3 6454.3L-1675.0 315.5M334297.5 6454.3L3646.2 319.2M-308998.7 6454.3L-1638.3 315.2M329008.4 6454.3L3599.1 318.8M-303978.1 6454.3L-1602.4 314.9M323719.3 6454.3L3553.1 318.4M-298957.4 6454.3L-1567.1 314.7M318430.3 6454.3L3508.2 318.1M-293936.8 6454.3L-1532.6 314.4M313141.2 6454.3L3464.3 317.7M-288916.1 6454.3L-1498.7 314.1M307852.1 6454.3L3421.4 317.4M-283895.5 6454.3L-1465.5 313.9M302563.0 6454.3L3379.5 317.0M-278874.9 6454.3L-1432.9 313.6M297273.9 6454.3L3338.6 316.7M-273854.2 6454.3L-1400.9 313.4M291984.8 6454.3L3298.5 316.4M-268833.6 6454.3L-1369.5 313.1M286695.7 6454.3L3259.4 316.1M-263812.9 6454.3L-1338.7 312.9M281406.6 6454.3L3221.1 315.8M-258792.3 6454.3L-1308.5 312.7M276117.6 6454.3L3183.6 315.5M-253771.7 6454.3L-1278.8 312.5M270828.5 6454.3L3146.9 315.2M-248751.0 6454.3L-1249.7 312.2M265539.4 6454.3L3111.0 314.9M-243730.4 6454.3L-1221.1 312.0M260250.3 6454.3L3075.9 314.6M-238709.7 6454.3L-1193.0 311.8M254961.2 6454.3L3041.4 314.3M-233689.1 6454.3L-1165.4 311.6M249672.1 6454.3L3007.7 314.0M-228668.5 6454.3L-1138.2 311.4M244383.0 6454.3L2974.6 313.8M-223647.8 6454.3L-1111.6 311.2M239094.0 6454.3L2942.3 313.5M-218627.2 6454.3L-1085.4 311.0M233804.9 6454.3L2910.5 313.3M-213606.6 6454.3L-1059.6 310.8M228515.8 6454.3L2879.4 313.0M-208585.9 6454.3L-1034.3 310.6M223226.7 6454.3L2848.9 312.8M-203565.3 6454.3L-1009.4 310.4M217937.6 6454.3L2818.9 312.5M-198544.6 6454.3L-984.9 310.2M212648.5 6454.3L2789.6 312.3M-193524.0 6454.3L-960.8 310.0M207359.4 6454.3L2760.8 312.1M-188503.4 6454.3L-937.1 309.8M202070.3 6454.3L2732.5 311.8M-183482.7 6454.3L-913.7 309.7M196781.3 6454.3L2704.8 311.6M-178462.1 6454.3L-890.8 309.5M191492.2 6454.3L2677.5 311.4M-173441.4 6454.3L-868.2 309.3M186203.1 6454.3L2650.8 311.2M-168420.8 6454.3L-846.0 309.1M180914.0 6454.3L2624.5 311.0M-163400.2 6454.3L-824.1 309.0M175624.9 6454.3L2598.8 310.8M-158379.5 6454.3L-802.6 308.8M170335.8 6454.3L2573.4 310.5M-153358.9 6454.3L-781.4 308.6M165046.7 6454.3L2548.5 310.3M-148338.2 6454.3L-760.5 308.5M159757.6 6454.3L2524.1 310.2M-143317.6 6454.3L-739.9 308.3M154468.6 6454.3L2500.1 310.0M-138297.0 6454.3L-719.7 308.2M149179.5 6454.3L2476.4 309.8M-133276.3 6454.3L-699.7 308.0M143890.4 6454.3L2453.2 309.6M-128255.7 6454.3L-680.1 307.9M138601.3 6454.3L2430.4 309.4M-123235.0 6454.3L-660.7 307.7M133312.2 6454.3L2407.9 309.2M-118214.4 6454.3L-641.6 307.6M128023.1 6454.3L2385.9 309.0M-113193.8 6454.3L-622.8 307.4M122734.0 6454.3L2364.1 308.9M-108173.1 6454.3L-604.3 307.3M117444.9 6454.3L2342.8 308.7M-103152.5 6454.3L-586.0 307.1M112155.9 6454.3L2321.8 308.5M-98131.8 6454.3L-568.0 307.0M106866.8 6454.3L2301.1 308.4M-93111.2 6454.3L-550.2 306.9M101577.7 6454.3L2280.7 308.2M-88090.6 6454.3L-532.7 306.7M96288.6 6454.3L2260.7 308.0M-83069.9 6454.3L-515.5 306.6M90999.5 6454.3L2241.0 307.9M-78049.3 6454.3L-498.4 306.5M85710.4 6454.3L2221.6 307.7M-73028.6 6454.3L-481.7 306.3M80421.3 6454.3L2202.5 307.6M-68008.0 6454.3L-465.1 306.2M75132.2 6454.3L2183.6 307.4M-62987.4 6454.3L-448.8 306.1M69843.2 6454.3L2165.1 307.3M-57966.7 6454.3L-432.6 306.0M64554.1 6454.3L2146.8 307.1M-52946.1 6454.3L-416.7 305.8M59265.0 6454.3L2128.9 307.0M-47925.4 6454.3L-401.0 305.7M53975.9 6454.3L2111.1 306.8M-42904.8 6454.3L-385.6 305.6M48686.8 6454.3L2093.7 306.7M-37884.2 6454.3L-370.3 305.5M43397.7 6454.3L2076.5 306.5M-32863.5 6454.3L-355.2 305.4M38108.6 6454.3L2059.5 306.4M-27842.9 6454.3L-340.3 305.3M32819.5 6454.3L2042.8 306.3M-22822.3 6454.3L-325.6 305.2M27530.5 6454.3L2026.4 306.1M-17801.6 6454.3L-311.1 305.0M22241.4 6454.3L2010.1 306.0M-12781.0 6454.3L-296.8 304.9M16952.3 6454.3L1994.1 305.9M-7760.3 6454.3L-282.6 304.8M11663.2 6454.3L1978.3 305.8M-2739.7 6454.3L-268.6 304.7M6374.1 6454.3L1962.8 305.6M2280.9 6454.3L-254.8 304.6M1085.0 6454.3L1947.4 305.5M7301.6 6454.3L-241.2 304.5M-4204.1 6454.3L1932.3 305.4M17342.9 6454.3L-214.5 304.3M-14782.2 6454.3L1902.6 305.1M22363.5 6454.3L-201.3 304.2M-20071.3 6454.3L1888.1 305.0M27384.1 6454.3L-188.4 304.1M-25360.4 6454.3L1873.7 304.9M32404.8 6454.3L-175.5 304.0M-30649.5 6454.3L1859.6 304.8M37425.4 6454.3L-162.9 303.9M-35938.6 6454.3L1845.6 304.7M42446.1 6454.3L-150.4 303.8M-41227.7 6454.3L1831.8 304.6M47466.7 6454.3L-138.0 303.7M-46516.8 6454.3L1818.2 304.5M52487.3 6454.3L-125.8 303.6M-51805.8 6454.3L1804.8 304.4M57508.0 6454.3L-113.7 303.5M-57094.9 6454.3L1791.6 304.3M62528.6 6454.3L-101.7 303.4M-62384.0 6454.3L1778.5 304.1M67549.3 6454.3L-89.9 303.3M-67673.1 6454.3L1765.6 304.0M72569.9 6454.3L-78.3 303.3M-72962.2 6454.3L1752.8 303.9M77590.5 6454.3L-66.7 303.2M-78251.3 6454.3L1740.2 303.8M82611.2 6454.3L-55.3 303.1M-83540.4 6454.3L1727.8 303.7M87631.8 6454.3L-44.0 303.0M-88829.5 6454.3L1715.5 303.6M92652.5 6454.3L-32.9 302.9M-94118.5 6454.3L1703.3 303.5M97673.1 6454.3L-21.9 302.8M-99407.6 6454.3L1691.4 303.4M102693.7 6454.3L-11.0 302.7M-104696.7 6454.3L1679.5 303.4M107714.4 6454.3L-0.2 302.7M-109985.8 6454.3L1667.8 303.3M112735.0 6454.3L10.5 302.6M-115274.9 6454.3L1656.3 303.2M117755.7 6454.3L21.0 302.5M-120564.0 6454.3L1644.8 303.1M122776.3 6454.3L31.5 302.4M-125853.1 6454.3L1633.5 303.0M127796.9 6454.3L41.8 302.3M-131142.2 6454.3L1622.4 302.9M132817.6 6454.3L52.0 302.3M-136431.2 6454.3L1611.4 302.8M137838.2 6454.3L62.1 302.2M-141720.3 6454.3L1600.5 302.7M142858.9 6454.3L72.1 302.1M-147009.4 6454.3L1589.7 302.6M147879.5 6454.3L82.0 302.0M-152298.5 6454.3L1579.1 302.5M152900.1 6454.3L91.8 302.0M-157587.6 6454.3L1568.5 302.5M157920.8 6454.3L101.5 301.9M-162876.7 6454.3L1558.1 302.4M162941.4 6454.3L111.1 301.8M-168165.8 6454.3L1547.8 302.3M167962.1 6454.3L120.6 301.7M-173454.9 6454.3L1537.7 302.2M172982.7 6454.3L130.0 301.7M-178743.9 6454.3L1527.6 302.1M178003.3 6454.3L139.3 301.6M-184033.0 6454.3L1517.7 302.0M183024.0 6454.3L148.5 301.5M-189322.1 6454.3L1507.8 302.0M188044.6 6454.3L157.6 301.4M-194611.2 6454.3L1498.1 301.9M193065.2 6454.3L166.6 301.4M-199900.3 6454.3L1488.5 301.8M198085.9 6454.3L175.5 301.3M-205189.4 6454.3L1479.0 301.7M203106.5 6454.3L184.3 301.2M-210478.5 6454.3L1469.6 301.7M208127.2 6454.3L193.1 301.2M-215767.5 6454.3L1460.2 301.6M213147.8 6454.3L201.8 301.1M-221056.6 6454.3L1451.0 301.5M218168.4 6454.3L210.3 301.0M-226345.7 6454.3L1441.9 301.4M223189.1 6454.3L218.8 301.0M-231634.8 6454.3L1432.9 301.4M228209.7 6454.3L227.2 300.9M-236923.9 6454.3L1424.0 301.3M233230.4 6454.3L235.6 300.9M-242213.0 6454.3L1415.2 301.2M238251.0 6454.3L243.8 300.8M-247502.1 6454.3L1406.4 301.2M243271.6 6454.3L252.0 300.7M-252791.2 6454.3L1397.8 301.1M248292.3 6454.3L260.1 300.7M-258080.2 6454.3L1389.2 301.0M253312.9 6454.3L268.1 300.6M-263369.3 6454.3L1380.7 300.9M258333.6 6454.3L276.0 300.5M-268658.4 6454.3L1372.4 300.9M263354.2 6454.3L283.9 300.5M-273947.5 6454.3L1364.1 300.8M268374.8 6454.3L291.7 300.4M-279236.6 6454.3L1355.8 300.7M273395.5 6454.3L299.4 300.4M-284525.7 6454.3L1347.7 300.7M278416.1 6454.3L307.1 300.3M-289814.8 6454.3L1339.7 300.6M283436.8 6454.3L314.6 300.2M-295103.9 6454.3L1331.7 300.5M288457.4 6454.3L322.1 300.2M-300392.9 6454.3L1323.8 300.5M293478.0 6454.3L329.6 300.1M-305682.0 6454.3L1316.0 300.4M298498.7 6454.3L337.0 300.1M-310971.1 6454.3L1308.3 300.4M303519.3 6454.3L344.3 300.0M-316260.2 6454.3L1300.6 300.3M308540.0 6454.3L351.5 300.0M-321549.3 6454.3L1293.0 300.2M313560.6 6454.3L358.7 299.9M-326838.4 6454.3L1285.5 300.2M318581.2 6454.3L365.8 299.9M-332127.5 6454.3L1278.0 300.1M323601.9 6454.3L372.8 299.8M-337416.6 6454.3L1270.7 300.1M328622.5 6454.3L379.8 299.7M-342705.6 6454.3L1263.4 300.0M333643.2 6454.3L386.7 299.7M-347994.7 6454.3L1256.1 299.9M338663.8 6454.3L393.6 299.6M-353283.8 6454.3L1249.0 299.9M343684.4 6454.3L400.4 299.6M-358572.9 6454.3L1241.9 299.8M348705.1 6454.3L407.1 299.5M-363862.0 6454.3L1234.9 299.8M353725.7 6454.3L413.8 299.5M-369151.1 6454.3L1227.9 299.7M358746.4 6454.3L420.5 299.4M-374440.2 6454.3L1221.0 299.7M363767.0 6454.3L427.0 299.4M-379729.3 6454.3L1214.2 299.6M368787.6 6454.3L433.5 299.3M-385018.3 6454.3L1207.4 299.5M373808.3 6454.3L440.0 299.3M-390307.4 6454.3L1200.7 299.5M378828.9 6454.3L446.4 299.2M-395596.5 6454.3L1194.0 299.4M383849.5 6454.3L452.7 299.2M-400885.6 6454.3L1187.4 299.4M388870.2 6454.3L459.0 299.1M-406174.7 6454.3L1180.9 299.3M393890.8 6454.3L465.3 299.1M-411463.8 6454.3L1174.4 299.3M398911.5 6454.3L471.5 299.0M-416752.9 6454.3L1168.0 299.2M403932.1 6454.3L477.6 299.0M-422042.0 6454.3L1161.7 299.2M408952.7 6454.3L483.7 298.9M-427331.0 6454.3L1155.4 299.1M413973.4 6454.3L489.7 298.9M-432620.1 6454.3L1149.1 299.1M418994.0 6454.3L495.7 298.9M-437909.2 6454.3L1142.9 299.0M424014.7 6454.3L501.7 298.8M-443198.3 6454.3L1136.8 299.0M429035.3 6454.3L507.6 298.8M-448487.4 6454.3L1130.7 298.9M434055.9 6454.3L513.4 298.7M-453776.5 6454.3L1124.7 298.9M439076.6 6454.3L519.2 298.7M-459065.6 6454.3L1118.7 298.8M444097.2 6454.3L525.0 298.6M-464354.6 6454.3L1112.8 298.8M449117.9 6454.3L530.7 298.6M-469643.7 6454.3L1106.9 298.7M454138.5 6454.3L536.3 298.5M-474932.8 6454.3L1101.1 298.7M459159.1 6454.3L541.9 298.5M-480221.9 6454.3L1095.3 298.6M464179.8 6454.3L547.5 298.5M-485511.0 6454.3L1089.6 298.6M469200.4 6454.3L553.0 298.4M-490800.1 6454.3L1083.9 298.6M474221.1 6454.3L558.5 298.4M-496089.2 6454.3L1078.3 298.5M479241.7 6454.3L563.9 298.3M-501378.3 6454.3L1072.7 298.5M484262.3 6454.3L569.3 298.3M-506667.3 6454.3L1067.1 298.4M489283.0 6454.3L574.7 298.3M-511956.4 6454.3L1061.6 298.4M494303.6 6454.3L580.0 298.2M-517245.5 6454.3L1056.2 298.3M499324.3 6454.3L585.3 298.2M-522534.6 6454.3L1050.8 298.3M504344.9 6454.3L590.5 298.1M-527823.7 6454.3L1045.4 298.2M509365.5 6454.3L595.7 298.1M-533112.8 6454.3L1040.1 298.2M514386.2 6454.3L600.9 298.1M-538401.9 6454.3L1034.8 298.2M519406.8 6454.3L606.0 298.0M-543691.0 6454.3L1029.6 298.1M524427.5 6454.3L611.1 298.0M-548980.0 6454.3L1024.4 298.1M529448.1 6454.3L616.1 297.9M-554269.1 6454.3L1019.3 298.0M534468.7 6454.3L621.1 297.9M-559558.2 6454.3L1014.2 298.0M539489.4 6454.3L626.1 297.9M-564847.3 6454.3L1009.1 298.0M544510.0 6454.3L631.0 297.8M-570136.4 6454.3L1004.1 297.9M549530.7 6454.3L635.9 297.8M-575425.5 6454.3L999.1 297.9M554551.3 6454.3L640.7 297.7M-580714.6 6454.3L994.2 297.8M559571.9 6454.3L645.5 297.7M-586003.7 6454.3L989.2 297.8M564592.6 6454.3L650.3 297.7M-591292.7 6454.3L984.4 297.8M569613.2 6454.3L655.1 297.6M-596581.8 6454.3L979.5 297.7M574633.8 6454.3L659.8 297.6M-601870.9 6454.3L974.7 297.7M579654.5 6454.3L664.5 297.6M-607160.0 6454.3L970.0 297.6M584675.1 6454.3L669.1 297.5M-612449.1 6454.3L965.3 297.6M589695.8 6454.3L673.7 297.5M-617738.2 6454.3L960.6 297.6M594716.4 6454.3L678.3 297.5M-623027.3 6454.3L955.9 297.5M599737.0 6454.3L682.8 297.4M-628316.4 6454.3L951.3 297.5M604757.7 6454.3L687.3 297.4M-633605.4 6454.3L946.7 297.4M609778.3 6454.3L691.8 297.4M-638894.5 6454.3L942.2 297.4M614799.0 6454.3L696.3 297.3M-644183.6 6454.3L937.7 297.4M619819.6 6454.3L700.7 297.3M-649472.7 6454.3L933.2 297.3M624840.2 6454.3L705.1 297.3M-654761.8 6454.3L928.8 297.3M629860.9 6454.3L709.4 297.2M-660050.9 6454.3L924.4 297.3M634881.5 6454.3L713.8 297.2M-665340.0 6454.3L920.0 297.2M639902.2 6454.3L718.0 297.2M-670629.0 6454.3L915.6 297.2M644922.8 6454.3L722.3 297.1M-675918.1 6454.3L911.3 297.2M649943.4 6454.3L726.5 297.1M-681207.2 6454.3L907.0 297.1M654964.1 6454.3L730.8 297.1M-686496.3 6454.3L902.8 297.1M659984.7 6454.3L734.9 297.0M-691785.4 6454.3L898.6 297.1M665005.4 6454.3L739.1 297.0M-697074.5 6454.3L894.4 297.0M670026.0 6454.3L743.2 297.0M-702363.6 6454.3L890.2 297.0M675046.6 6454.3L747.3 296.9M-707652.7 6454.3L886.1 297.0M680067.3 6454.3L751.4 296.9M-712941.7 6454.3L882.0 296.9M685087.9 6454.3L755.4 296.9M-718230.8 6454.3L877.9 296.9M690108.6 6454.3L759.4 296.8M-723519.9 6454.3L873.9 296.9M695129.2 6454.3L763.4 296.8M-728809.0 6454.3L869.9 296.8M700149.8 6454.3L767.4 296.8M-734098.1 6454.3L865.9 296.8M705170.5 6454.3L771.3 296.7M-739387.2 6454.3L861.9 296.8M710191.1 6454.3L775.2 296.7M-268126.4 2518.3L858.0 296.7M715211.8 6454.3L779.1 296.7M-143886.1 1483.7L854.1 296.7M720232.4 6454.3L782.9 296.7M-98378.0 1104.8L850.2 296.7M725253.0 6454.3L786.8 296.6M-74769.8 908.2L846.4 296.6M730273.7 6454.3L790.6 296.6M-60319.1 787.8L842.5 296.6M735294.3 6454.3L794.3 296.6M-50563.2 706.6L838.7 296.6M740315.0 6454.3L798.1 296.5M-43534.0 648.1L835.0 296.5M745335.6 6454.3L801.8 296.5M-38228.4 603.9L831.2 296.5M750356.2 6454.3L805.5 296.5M-34081.8 569.4L827.5 296.5M755376.9 6454.3L809.2 296.5M-30751.8 541.6L823.8 296.5M760397.5 6454.3L812.9 296.4M-28018.7 518.9L820.1 296.4M765418.2 6454.3L816.5 296.4M-25735.3 499.8L816.5 296.4" stroke="#5a5a5a" stroke-opacity="0.38" stroke-width="1" fill="none"/>
        <path d="M12322.2 6454.3L-180.3 327.7" stroke="#5e7e3e" stroke-opacity="0.9" stroke-width="1.5"/>
      </g></g>
      <g fill="none" stroke="#555555" stroke-width="0.9" stroke-linecap="round" stroke-linejoin="round"><path d="M443.1 319.3Q464.2 316.9 473.6 315.6L483.0 314.4"/><path d="M443.1 319.3Q450.8 330.3 456.5 335.3Q462.3 340.4 473.8 344.9L485.3 349.4"/><path d="M552.3 316.3Q538.9 315.5 531.2 315.2L523.6 314.9"/><path d="M552.3 316.3Q546.6 331.2 540.8 336.2Q535.1 341.2 526.9 344.8L518.8 348.5"/><path d="M444.1 321.6Q464.2 327.4 473.6 330.5L483.0 333.5"/><path d="M551.3 317.8Q535.1 324.5 526.5 328.2L518.0 331.8"/><path d="M491.0 309.2Q502.5 302.9 508.7 306.0L514.9 309.2"/><path d="M483.3 332.2L487.2 348.5L491.0 358.0L501.5 362.8L513.0 357.1L516.3 346.5L517.8 331.6"/><path d="M482.4 302.1Q480.7 314.0 483.0 317.0Q485.3 320.1 488.7 320.9Q492.2 321.6 491.4 320.5Q490.6 319.3 487.9 316.7Q485.3 314.0 483.8 308.0L482.4 302.1"/><path d="M515.9 301.5Q517.8 313.0 516.1 316.4Q514.4 319.7 511.3 320.7Q508.2 321.6 509.7 320.2Q511.1 318.8 513.0 315.9Q514.9 313.0 515.4 307.3L515.9 301.5"/><path d="M487.2 328.3Q491.0 325.9 493.1 327.1L495.2 328.3"/><path d="M507.9 327.4Q511.7 325.5 513.6 326.9L515.5 328.3"/><path d="M499.0 340.4Q497.7 348.1 499.6 349.2Q501.5 350.4 503.7 349.4Q505.9 348.5 505.2 344.4L504.4 340.4"/><path d="M498.7 355.2Q502.1 356.5 503.7 355.7L505.4 355.0"/><path d="M493.9 359.0Q493.3 365.7 493.1 369.1Q492.9 372.4 487.2 375.3Q481.4 378.1 475.7 380.5L469.9 382.9"/><path d="M510.2 360.0Q511.1 366.7 512.1 369.1Q513.0 371.4 518.3 373.4Q523.6 375.3 529.8 377.2L536.0 379.1"/><path d="M473.8 381.0Q489.1 389.6 496.8 394.1Q504.4 398.6 509.7 392.7Q514.9 386.8 519.7 381.8L524.5 376.8"/><path d="M472.8 382.6Q480.5 398.3 481.9 407.8Q483.3 417.4 483.8 427.0Q484.3 436.6 483.3 453.3L482.4 470.1"/><path d="M531.2 379.5Q525.9 398.3 525.7 409.8Q525.5 421.2 526.9 432.7Q528.4 444.2 530.7 455.7L533.1 467.2"/><path d="M483.0 459.6Q492.9 440.4 498.7 431.3Q504.4 422.2 511.1 432.3Q517.8 442.3 524.5 452.8L531.2 463.4"/><path d="M478.6 405.9L483.0 413.6"/><path d="M529.3 402.1L527.8 407.8"/><path d="M469.9 382.9Q458.4 405.9 452.7 417.4Q447.0 428.9 440.2 438.5Q433.5 448.1 424.0 464.3Q414.4 480.6 404.8 487.5L395.2 494.4"/><path d="M478.6 405.9Q469.9 425.1 465.1 431.8Q460.4 438.5 457.0 442.8Q453.7 447.1 453.2 453.3Q452.7 459.6 444.1 467.2Q435.5 474.9 428.8 480.8L422.1 486.7"/><path d="M536.0 379.1Q546.6 398.3 552.3 409.8Q558.0 421.2 563.8 429.9Q569.5 438.5 578.2 448.1Q586.8 457.6 596.8 461.7L606.9 465.7"/><path d="M527.8 407.8Q538.9 425.1 546.6 429.9Q554.2 434.7 555.6 439.4Q557.1 444.2 563.3 450.9Q569.5 457.6 577.2 461.7L584.9 465.7"/><path d="M606.9 465.7Q608.8 474.9 607.4 477.7Q605.9 480.6 601.1 482.2Q596.3 483.7 591.1 479.5Q585.8 475.3 585.3 470.5L584.9 465.7"/><path d="M597.9 470.7Q596.7 474.5 598.3 474.2L599.8 473.9"/><path d="M481.4 470.1L533.5 466.3"/><path d="M481.0 472.6L533.5 468.7"/><path d="M481.4 480.6L535.1 473.9"/><path d="M419.5 471.0Q411.8 478.7 404.1 485.4Q396.5 492.1 395.0 494.9Q393.6 497.8 392.9 502.6Q392.3 507.4 394.4 509.5Q396.5 511.6 404.1 510.9Q411.8 510.2 415.6 505.0Q419.5 499.7 420.9 494.0Q422.3 488.2 431.4 479.6L440.5 471.0"/><path d="M406.4 497.8Q404.1 503.9 405.8 502.8L407.4 501.6"/><path d="M470.2 471.0L467.3 541.8L481.1 539.0L481.7 471.0"/><path d="M474.4 474.8L472.5 539.9"/><path d="M477.9 474.8L476.9 539.0"/><path d="M481.7 479.6Q484.6 528.4 485.0 547.6Q485.5 566.7 482.6 580.1Q479.8 593.5 482.2 608.9Q484.6 624.2 487.9 639.5Q491.3 654.8 487.4 662.5Q483.6 670.1 483.1 673.9L482.6 677.8"/><path d="M482.6 677.8Q496.0 674.9 502.7 673.5Q509.4 672.0 509.9 666.8Q510.4 661.5 507.1 658.2Q503.7 654.8 502.3 649.1Q500.8 643.3 500.8 614.6Q500.8 585.9 503.2 557.2Q505.6 528.4 507.5 515.0L509.4 501.6"/><path d="M503.3 502.6L515.6 501.3"/><path d="M511.4 502.6Q523.8 557.2 528.1 600.2Q532.4 643.3 528.6 650.5Q524.8 657.7 525.2 662.5L525.7 667.2"/><path d="M525.7 667.2Q551.6 659.6 551.6 656.2Q551.6 652.9 546.8 648.1Q542.0 643.3 541.5 624.2Q541.0 605.0 543.9 595.4Q546.8 585.9 542.5 574.4Q538.2 562.9 537.2 545.7Q536.3 528.4 536.3 499.7L536.3 471.0"/><path d="M484.6 532.3Q494.1 534.2 498.9 530.8L503.7 527.5"/><path d="M518.1 526.5Q526.7 528.4 531.5 526.5L536.3 524.6"/><path d="M460.6 534.2Q419.5 546.6 401.3 549.5L383.1 552.4"/><path d="M372.0 545.3Q358.2 551.4 360.1 555.2Q362.0 559.1 369.2 561.9L376.4 564.8"/><path d="M264.4 587.8Q256.7 590.1 251.9 582.2Q247.1 574.4 245.7 561.0Q244.3 547.6 249.5 534.2Q254.8 520.8 266.3 512.6Q277.8 504.5 285.9 503.3Q294.1 502.0 306.0 506.6Q318.0 511.2 326.6 523.7Q335.2 536.1 334.7 548.5Q334.3 561.0 327.1 570.6Q319.9 580.1 309.4 584.2Q298.8 588.2 288.3 587.5Q277.8 586.8 269.2 581.1Q260.5 575.3 256.7 567.2L252.9 559.1"/><path d="M261.5 566.7Q258.6 547.6 262.5 537.1Q266.3 526.5 273.0 520.3Q279.7 514.1 287.4 512.6Q295.0 511.2 304.6 515.0Q314.2 518.9 319.4 528.4Q324.7 538.0 323.7 548.5Q322.8 559.1 315.6 566.3Q308.4 573.4 298.8 576.3Q289.3 579.2 279.7 577.3Q270.1 575.3 264.4 569.1Q258.6 562.9 255.8 555.2Q252.9 547.6 253.4 539.9L253.8 532.3"/><path d="M274.0 541.8Q266.3 536.1 264.9 542.8Q263.4 549.5 265.8 555.2Q268.2 561.0 275.9 564.3Q283.5 567.7 293.1 567.2Q302.7 566.7 310.3 561.0Q318.0 555.2 319.9 546.6Q321.8 538.0 318.5 530.4Q315.1 522.7 307.9 519.3Q300.8 516.0 296.9 516.5L293.1 517.0"/><path d="M269.2 540.9Q274.0 545.7 275.9 551.4Q277.8 557.2 284.5 560.0Q291.2 562.9 297.9 559.1Q304.6 555.2 306.5 548.5Q308.4 541.8 306.0 536.1Q303.6 530.4 298.4 528.4Q293.1 526.5 289.3 527.5L285.4 528.4"/><path d="M285.4 532.3Q278.7 526.5 277.8 512.2Q276.8 497.8 279.7 493.8Q282.6 489.8 286.4 490.0Q290.2 490.1 292.6 495.9Q295.0 501.6 293.6 514.1Q292.1 526.5 288.8 529.4L285.4 532.3"/></g><ellipse cx="492.9" cy="337.4" rx="5" ry="3.3" transform="rotate(14 492.9 337.4)" fill="#1a1a1a"/><ellipse cx="509.2" cy="337.4" rx="5" ry="3.3" transform="rotate(-14 509.2 337.4)" fill="#1a1a1a"/><ellipse cx="521.7" cy="306.7" rx="3.5" ry="2" transform="rotate(-15 521.7 306.7)" fill="none" stroke="#555555" stroke-width="0.9"/><circle cx="521.7" cy="306.7" r="1" fill="#222"/>
      <circle cx="715.2" cy="628.5" r="2.3" fill="#e81010"/>
      <defs><linearGradient id="g_body" gradientUnits="userSpaceOnUse" x1="854" y1="-49" x2="940" y2="-49"><stop offset="0" stop-color="#828282"/><stop offset="0.22" stop-color="#9a9a9a"/><stop offset="0.55" stop-color="#939393"/><stop offset="0.8" stop-color="#828282"/><stop offset="1" stop-color="#545454"/></linearGradient><linearGradient id="g_fleg" gradientUnits="userSpaceOnUse" x1="854" y1="-49" x2="896" y2="-49"><stop offset="0" stop-color="#868686"/><stop offset="0.35" stop-color="#a2a2a2"/><stop offset="0.7" stop-color="#949494"/><stop offset="1" stop-color="#606060"/></linearGradient><linearGradient id="g_bleg" gradientUnits="userSpaceOnUse" x1="903" y1="-49" x2="936" y2="-49"><stop offset="0" stop-color="#505050"/><stop offset="0.3" stop-color="#808080"/><stop offset="0.7" stop-color="#989898"/><stop offset="1" stop-color="#727272"/></linearGradient><linearGradient id="g_rarm" gradientUnits="userSpaceOnUse" x1="948" y1="536" x2="968" y2="531"><stop offset="0" stop-color="#727272"/><stop offset="0.45" stop-color="#939393"/><stop offset="1" stop-color="#626262"/></linearGradient><linearGradient id="g_larm" gradientUnits="userSpaceOnUse" x1="836" y1="499" x2="860" y2="509"><stop offset="0" stop-color="#848484"/><stop offset="0.3" stop-color="#b2b2b2"/><stop offset="0.62" stop-color="#9a9a9a"/><stop offset="1" stop-color="#747474"/></linearGradient><filter id="blur2" x="-50%" y="-50%" width="200%" height="200%"><feGaussianBlur stdDeviation="3"/></filter><filter id="blur1" x="-50%" y="-50%" width="200%" height="200%"><feGaussianBlur stdDeviation="1.2"/></filter><clipPath id="figclip"><polygon points="886.0,395.0 917.0,395.0 918.0,406.0 924.0,413.0 935.0,421.0 944.0,430.0 948.0,441.0 955.5,467.0 965.0,523.0 973.0,573.0 981.0,578.0 986.0,587.0 987.0,598.0 982.0,606.0 973.0,607.0 964.0,599.0 959.0,589.0 956.0,577.0 948.4,522.8 938.0,471.0 935.8,533.0 935.8,598.5 937.0,641.0 934.2,664.0 931.7,737.0 929.0,817.0 927.0,822.5 912.0,822.5 907.4,817.5 907.4,761.5 909.8,688.4 903.7,632.4 902.5,627.5 895.2,664.0 887.9,737.0 885.4,810.0 886.7,839.5 884.2,844.3 869.6,845.6 866.0,839.5 861.0,786.0 853.8,751.8 867.2,705.5 866.0,639.7 862.6,593.5 857.6,563.0 867.7,533.0 875.3,482.4 881.9,469.3 883.0,413.0 886.0,408.0"/><polygon points="885.0,409.0 873.0,415.0 862.0,423.0 855.0,435.0 852.0,446.0 837.4,497.6 814.7,573.3 807.0,615.0 800.0,618.0 795.0,629.0 795.5,644.0 801.0,655.0 810.0,659.0 819.0,654.0 825.0,641.0 824.0,623.0 824.2,618.6 840.0,568.0 860.0,507.7 880.3,457.0 890.0,427.0"/></clipPath><linearGradient id="g_legm" gradientUnits="userSpaceOnUse" x1="0" y1="576" x2="0" y2="651"><stop offset="0" stop-color="#fff" stop-opacity="0"/><stop offset="1" stop-color="#fff" stop-opacity="1"/></linearGradient><linearGradient id="g_armm" gradientUnits="userSpaceOnUse" x1="0" y1="421" x2="0" y2="481"><stop offset="0" stop-color="#fff" stop-opacity="0.15"/><stop offset="1" stop-color="#fff" stop-opacity="1"/></linearGradient><mask id="armmask" maskUnits="userSpaceOnUse" x="0" y="0" width="1600" height="1000"><rect x="0" y="0" width="1600" height="1000" fill="url(#g_armm)"/></mask><mask id="legmask" maskUnits="userSpaceOnUse" x="0" y="0" width="1600" height="1000"><rect x="0" y="0" width="1600" height="1000" fill="url(#g_legm)"/></mask></defs><g fill="none" stroke="#2a2a2a" stroke-width="1.6" stroke-linejoin="round" opacity="0.85"><polygon points="886.0,395.0 917.0,395.0 918.0,406.0 924.0,413.0 935.0,421.0 944.0,430.0 948.0,441.0 955.5,467.0 965.0,523.0 973.0,573.0 981.0,578.0 986.0,587.0 987.0,598.0 982.0,606.0 973.0,607.0 964.0,599.0 959.0,589.0 956.0,577.0 948.4,522.8 938.0,471.0 935.8,533.0 935.8,598.5 937.0,641.0 934.2,664.0 931.7,737.0 929.0,817.0 927.0,822.5 912.0,822.5 907.4,817.5 907.4,761.5 909.8,688.4 903.7,632.4 902.5,627.5 895.2,664.0 887.9,737.0 885.4,810.0 886.7,839.5 884.2,844.3 869.6,845.6 866.0,839.5 861.0,786.0 853.8,751.8 867.2,705.5 866.0,639.7 862.6,593.5 857.6,563.0 867.7,533.0 875.3,482.4 881.9,469.3 883.0,413.0 886.0,408.0"/><polygon points="885.0,409.0 873.0,415.0 862.0,423.0 855.0,435.0 852.0,446.0 837.4,497.6 814.7,573.3 807.0,615.0 800.0,618.0 795.0,629.0 795.5,644.0 801.0,655.0 810.0,659.0 819.0,654.0 825.0,641.0 824.0,623.0 824.2,618.6 840.0,568.0 860.0,507.7 880.3,457.0 890.0,427.0"/></g><polygon points="886.0,395.0 917.0,395.0 918.0,406.0 924.0,413.0 935.0,421.0 944.0,430.0 948.0,441.0 955.5,467.0 965.0,523.0 973.0,573.0 981.0,578.0 986.0,587.0 987.0,598.0 982.0,606.0 973.0,607.0 964.0,599.0 959.0,589.0 956.0,577.0 948.4,522.8 938.0,471.0 935.8,533.0 935.8,598.5 937.0,641.0 934.2,664.0 931.7,737.0 929.0,817.0 927.0,822.5 912.0,822.5 907.4,817.5 907.4,761.5 909.8,688.4 903.7,632.4 902.5,627.5 895.2,664.0 887.9,737.0 885.4,810.0 886.7,839.5 884.2,844.3 869.6,845.6 866.0,839.5 861.0,786.0 853.8,751.8 867.2,705.5 866.0,639.7 862.6,593.5 857.6,563.0 867.7,533.0 875.3,482.4 881.9,469.3 883.0,413.0 886.0,408.0" fill="url(#g_body)"/><g clip-path="url(#figclip)"><g mask="url(#armmask)"><polygon points="924.0,413.0 935.0,421.0 944.0,430.0 948.0,441.0 955.5,467.0 965.0,523.0 973.0,573.0 981.0,578.0 986.0,587.0 987.0,598.0 982.0,606.0 973.0,607.0 964.0,599.0 959.0,589.0 956.0,577.0 948.4,522.8 938.0,471.0 928.0,451.0" fill="url(#g_rarm)"/></g><g mask="url(#legmask)"><polygon points="903.7,632.4 909.8,688.4 907.4,761.5 907.4,817.5 912.0,822.5 927.0,822.5 929.0,817.0 931.7,737.0 934.2,664.0 937.0,641.0 936.0,601.0 913.0,611.0" fill="url(#g_bleg)"/><polygon points="858.6,591.0 866.0,639.7 867.2,705.5 853.8,751.8 861.0,786.0 866.0,839.5 869.6,845.6 884.2,844.3 886.7,839.5 885.4,810.0 887.9,737.0 895.2,664.0 902.5,627.5 905.0,613.0 888.0,601.0" fill="url(#g_fleg)"/></g><polygon points="885.0,409.0 873.0,415.0 862.0,423.0 855.0,435.0 852.0,446.0 837.4,497.6 814.7,573.3 807.0,615.0 800.0,618.0 795.0,629.0 795.5,644.0 801.0,655.0 810.0,659.0 819.0,654.0 825.0,641.0 824.0,623.0 824.2,618.6 840.0,568.0 860.0,507.7 880.3,457.0 890.0,427.0" fill="#8e8e8e"/><g mask="url(#armmask)"><polygon points="885.0,409.0 873.0,415.0 862.0,423.0 855.0,435.0 852.0,446.0 837.4,497.6 814.7,573.3 807.0,615.0 800.0,618.0 795.0,629.0 795.5,644.0 801.0,655.0 810.0,659.0 819.0,654.0 825.0,641.0 824.0,623.0 824.2,618.6 840.0,568.0 860.0,507.7 880.3,457.0 890.0,427.0" fill="url(#g_larm)"/></g><g filter="url(#blur2)"><path d="M882 421 Q903 417 928 427 L924 456 Q903 449 882 463Z" fill="#8e8e8e" opacity="0.8"/><path d="M888 491 Q910 531 906 591 L894 599 Q882 551 876 511Z" fill="#a8a8a8" opacity="0.6"/><path d="M901 611 L914 623 L910 651 L898 641Z" fill="#6a6a6a" opacity="0.9"/><path d="M910 591 L932 601 L926 619 L912 619Z" fill="#6a6a6a" opacity="0.45"/></g><g filter="url(#blur1)"><path d="M882 469 L876 486" stroke="#5a4e4a" stroke-width="2.5" opacity="0.7"/></g></g><ellipse cx="901.5" cy="396.5" rx="15" ry="2.2" fill="#bdbdbd"/><g><path d="M896.3 839.1V873.1" stroke="#111" stroke-width="1.3"/><path d="M896.3 839.1V844.1M896.3 868.1V873.1" stroke="#4a90e0" stroke-width="1.6"/><circle cx="896.3" cy="856.1" r="10" fill="none" stroke="#fff" stroke-width="2"/><circle cx="896.3" cy="856.1" r="10" fill="none" stroke="#e01a1a" stroke-width="2" stroke-dasharray="5.2 5.2"/><path d="M889.3 852.6L903.3 859.6M889.3 859.9L903.3 852.3000000000001" stroke="#111" stroke-width="1"/><circle cx="896.3" cy="856.1" r="3.2" fill="#ff9d1c" stroke="#1a1a1a" stroke-width="0.8"/></g>
    </g></svg>
<div style="left:2px;top:49px;width:1573px;height:26px;background:#303030;border-radius:7px 7px 0 0"></div>
<div style="left:2px;top:75px;width:309px;height:25px;background:#303030;border-radius:0 0 7px 0"></div>
<div style="left:1493px;top:75px;width:82px;height:25px;background:#303030;border-radius:0 0 0 7px"></div>
<svg style="left:0;top:0" width="1918" height="1149" viewBox="0 0 1918 1149"><rect x="2.5" y="49.5" width="1573" height="998" rx="7" fill="none" stroke="#4a4a4a" stroke-width="1" stroke-opacity="0.8"/><rect x="12" y="52" width="30" height="18" rx="4" fill="#282828" /><g stroke="#d0d0d0" stroke-width="1.1" fill="none"><path d="M16 61.5H30M16 66.5H30M19 58V69M27 58V69"/></g><circle cx="28" cy="57.5" r="3.2" fill="#e6e6e6"/><path d="M33.5 59.75 L37 63.25 L40.5 59.75" fill="none" stroke="#c8c8c8" stroke-width="1.2" stroke-linecap="round" stroke-linejoin="round"/><rect x="49" y="52" width="109" height="18" rx="4" fill="#282828" /><g stroke="#cfcfcf" stroke-width="1.1" fill="none"><path d="M53.5 58V55.5H56M63 55.5H65.5V58M65.5 64V66.5H63M56 66.5H53.5V64"/></g><rect x="56" y="58" width="7" height="6" fill="#e0e0e0"/><path d="M148.5 59.75 L152 63.25 L155.5 59.75" fill="none" stroke="#c8c8c8" stroke-width="1.2" stroke-linecap="round" stroke-linejoin="round"/><rect x="665" y="52" width="76" height="18" rx="4" fill="#282828" /><g stroke="#d8d8d8" stroke-width="1.1" fill="none"><path d="M671 67H683M681 65L683 67L681 69M671 67V55M669 57L671 55L673 57M671 67L680 57M677 57H680V60"/></g><circle cx="671" cy="67" r="1.6" fill="#303030" stroke="#d8d8d8" stroke-width="1"/><path d="M731.5 59.75 L735 63.25 L738.5 59.75" fill="none" stroke="#c8c8c8" stroke-width="1.2" stroke-linecap="round" stroke-linejoin="round"/><rect x="748" y="52" width="30" height="18" rx="4" fill="#282828" /><g stroke="#d8d8d8" stroke-width="1.2" fill="none"><circle cx="755" cy="64" r="3.8"/><circle cx="762" cy="58" r="3.8"/></g><circle cx="759" cy="61" r="1.5" fill="#e0e0e0"/><path d="M768.5 59.75 L772 63.25 L775.5 59.75" fill="none" stroke="#c8c8c8" stroke-width="1.2" stroke-linecap="round" stroke-linejoin="round"/><rect x="785" y="52" width="50" height="18" rx="4" fill="#282828" /><path d="M785 56 a4 4 0 0 1 4 -4 H803 V70 H789 a4 4 0 0 1 -4 -4Z" fill="#4a4a4a"/><path d="M790 59 Q791 54 796 54.5 Q800.5 55.5 799.5 61 L797 66.5" fill="none" stroke="#909090" stroke-width="2.4"/><g fill="#e8e8e8"><rect x="807" y="55" width="4.5" height="4.5"/><rect x="815" y="55" width="4.5" height="4.5"/><rect x="807" y="63" width="4.5" height="4.5"/><rect x="815" y="63" width="4.5" height="4.5"/></g><path d="M825.5 59.75 L829 63.25 L832.5 59.75" fill="none" stroke="#c8c8c8" stroke-width="1.2" stroke-linecap="round" stroke-linejoin="round"/><rect x="842" y="52" width="50" height="18" rx="4" fill="#282828" /><path d="M842 56 a4 4 0 0 1 4 -4 H860 V70 H846 a4 4 0 0 1 -4 -4Z" fill="#4a4a4a"/><circle cx="851" cy="61" r="6.5" fill="none" stroke="#9a9a9a" stroke-width="1"/><circle cx="851" cy="61" r="2" fill="#e6e6e6"/><path d="M865 68 Q869 68 870 62 Q871.5 54.5 872.5 54.5 Q873.5 54.5 875 62 Q876 68 880 68" fill="none" stroke="#7a7a7a" stroke-width="1"/><path d="M882.5 59.75 L886 63.25 L889.5 59.75" fill="none" stroke="#6a6a6a" stroke-width="1.2" stroke-linecap="round" stroke-linejoin="round"/><rect x="1320" y="52" width="30" height="18" rx="4" fill="#282828" /><path d="M1323 60 L1331 63.5 L1327.5 64.5 L1326.5 68 Z" fill="#e0e0e0"/><path d="M1327 57 Q1331 53 1335 57 Q1331 61 1327 57Z" fill="none" stroke="#e0e0e0" stroke-width="1.1"/><circle cx="1331" cy="57" r="1.4" fill="#e0e0e0"/><path d="M1340.5 59.75 L1344 63.25 L1347.5 59.75" fill="none" stroke="#c8c8c8" stroke-width="1.2" stroke-linecap="round" stroke-linejoin="round"/><rect x="1357" y="52" width="38" height="18" rx="4" fill="#282828" /><path d="M1357 56 a4 4 0 0 1 4 -4 H1375 V70 H1361 a4 4 0 0 1 -4 -4Z" fill="#4772b3"/><g fill="none" stroke="#f0f0f0" stroke-width="1.1"><path d="M1361 58 Q1368 56 1371 66"/><path d="M1362 67 L1371 56 M1368 56 H1371 V59"/><circle cx="1362" cy="67" r="1.6"/></g><path d="M1381.5 59.75 L1385 63.25 L1388.5 59.75" fill="none" stroke="#c8c8c8" stroke-width="1.2" stroke-linecap="round" stroke-linejoin="round"/><rect x="1402" y="52" width="38" height="18" rx="4" fill="#282828" /><path d="M1402 56 a4 4 0 0 1 4 -4 H1420 V70 H1406 a4 4 0 0 1 -4 -4Z" fill="#4772b3"/><circle cx="1413" cy="59.5" r="4.5" fill="#f0f0f0"/><path d="M1407 61 A5 5 0 1 0 1415 66" fill="none" stroke="#f0f0f0" stroke-width="1.2"/><path d="M1426.5 59.75 L1430 63.25 L1433.5 59.75" fill="none" stroke="#c8c8c8" stroke-width="1.2" stroke-linecap="round" stroke-linejoin="round"/><rect x="1447" y="52" width="18" height="18" rx="4" fill="#4a4a4a" /><g fill="none" stroke="#d8d8d8" stroke-width="1"><rect x="1450" y="57" width="9" height="9.5"/><path d="M1452.5 57V54.5H1462V64H1459"/></g><path d="M1452 60.5V63.5H1455" stroke="#d8d8d8" stroke-width="1" fill="none" stroke-dasharray="1.2 1"/><rect x="1472" y="52" width="95" height="18" rx="4" fill="#282828" /><path d="M1472 56 a4 4 0 0 1 4 -4 H1548 V70 H1476 a4 4 0 0 1 -4 -4Z" fill="#4a4a4a"/><rect x="1490.5" y="52" width="18.5" height="18" fill="#4772b3"/><g fill="none" stroke="#cfcfcf" stroke-width="1"><circle cx="1481" cy="61" r="6.2"/><ellipse cx="1481" cy="61" rx="2.6" ry="6.2"/><path d="M1474.8 59H1487.2M1474.8 63H1487.2"/></g><circle cx="1500" cy="61" r="6.5" fill="#dfe6f2"/><circle cx="1519" cy="61" r="6.5" fill="#6a6a6a" stroke="#cfcfcf" stroke-width="1"/><path d="M1519 54.5 A6.5 6.5 0 0 1 1525.5 61 H1519Z M1519 61 A6.5 6.5 0 0 1 1512.5 61Z" fill="#cfcfcf"/><path d="M1512.5 61 A6.5 6.5 0 0 1 1519 54.5 V61Z" fill="#d6d6d6"/><circle cx="1538" cy="61" r="6.3" fill="#525252" stroke="#cfcfcf" stroke-width="1"/><path d="M1534 59 Q1535 56 1538 55.5" fill="none" stroke="#e8e8e8" stroke-width="1"/><line x1="1509.5" y1="52" x2="1509.5" y2="70" stroke="#3d3d3d"/><line x1="1528.5" y1="52" x2="1528.5" y2="70" stroke="#3d3d3d"/><path d="M1553.5 59.75 L1557 63.25 L1560.5 59.75" fill="none" stroke="#c8c8c8" stroke-width="1.2" stroke-linecap="round" stroke-linejoin="round"/><rect x="78" y="79" width="98" height="18" rx="4" fill="#282828" /><g stroke="#cfcfcf" stroke-width="1" fill="none"><path d="M87 93V82M85 84L87 82L89 84M87 93H96M94 91L96 93L94 95M87 93L83 96.5M83 94.5V96.5H85"/></g><circle cx="87" cy="93" r="1.8" fill="#e0e0e0"/><path d="M166.5 87.25 L170 90.75 L173.5 87.25" fill="none" stroke="#c8c8c8" stroke-width="1.2" stroke-linecap="round" stroke-linejoin="round"/><rect x="224" y="79" width="78" height="18" rx="4" fill="#282828" /><path d="M293.5 87.25 L297 90.75 L300.5 87.25" fill="none" stroke="#c8c8c8" stroke-width="1.2" stroke-linecap="round" stroke-linejoin="round"/><rect x="1502" y="79" width="65" height="18" rx="4" fill="#282828" /><path d="M1557.5 87.25 L1561 90.75 L1564.5 87.25" fill="none" stroke="#c8c8c8" stroke-width="1.2" stroke-linecap="round" stroke-linejoin="round"/></svg>
<span class="t" style="left:74.0px;top:55.8px;font-size:11.8px;color:#e6e6e6;">Object Mode</span>
<span class="t" style="left:171.2px;top:55.8px;font-size:11.8px;color:#e6e6e6;">View</span>
<span class="t" style="left:212.2px;top:55.8px;font-size:11.8px;color:#e6e6e6;">Select</span>
<span class="t" style="left:259.0px;top:55.8px;font-size:11.8px;color:#e6e6e6;">Add</span>
<span class="t" style="left:296.0px;top:55.8px;font-size:11.8px;color:#e6e6e6;">Object</span>
<span class="t" style="left:690.2px;top:55.8px;font-size:11.8px;color:#e6e6e6;">Global</span>
<span class="t" style="left:11.0px;top:82.4px;font-size:11.8px;color:#c8c8c8;">Orientation:</span>
<span class="t" style="left:103.3px;top:82.4px;font-size:11.8px;color:#e6e6e6;">Default</span>
<span class="t" style="left:186.4px;top:82.4px;font-size:11.8px;color:#c8c8c8;">Drag:</span>
<span class="t" style="left:231.4px;top:82.4px;font-size:11.8px;color:#e6e6e6;">Select Box</span>
<span class="t" style="left:1509.2px;top:82.8px;font-size:11.8px;color:#e6e6e6;">Options</span>
<svg style="left:0;top:0" width="1918" height="1149" viewBox="0 0 1918 1149"><rect x="11" y="110" width="37" height="67.5" rx="4" fill="#282828"/><rect x="11" y="143" width="37" height="1" fill="#3a3a3a"/><rect x="11" y="185" width="37" height="138" rx="4" fill="#282828"/><rect x="11" y="218" width="37" height="1" fill="#3a3a3a"/><rect x="11" y="253" width="37" height="1" fill="#3a3a3a"/><rect x="11" y="288" width="37" height="1" fill="#3a3a3a"/><rect x="11" y="330" width="37" height="68" rx="4" fill="#282828"/><rect x="11" y="363.5" width="37" height="1" fill="#3a3a3a"/><rect x="11" y="405" width="37" height="33" rx="4" fill="#282828"/><path d="M11 189 a4 4 0 0 1 4 -4 H44 a4 4 0 0 1 4 4 V218 H11Z" fill="#4772b3"/><rect x="19.5" y="115.5" width="20" height="19" fill="none" stroke="#e0a040" stroke-width="1.2" stroke-dasharray="3 2.2"/><path d="M26.5 120 L35 127.5 L30.5 128 L27.5 131.5Z" fill="#e0e0e0"/><path d="M44.5 139.5 L46 141 H43Z M46 138 V141 H43Z" fill="#9a9a9a"/><circle cx="29.5" cy="160.5" r="11" fill="none" stroke="#f0f0f0" stroke-width="1.6"/><circle cx="29.5" cy="160.5" r="11" fill="none" stroke="#9a2a2a" stroke-width="1.6" stroke-dasharray="4.3 4.3" stroke-dashoffset="2"/><path d="M29.5 153V158M29.5 163V168M22 160.5H27M32 160.5H37" stroke="#8a8a8a" stroke-width="1.6"/><g fill="#e8e8e8"><path d="M29.5 190L33 195H26Z M29.5 213L33 208H26Z M18 201.5L23 198V205Z M41 201.5L36 198V205Z"/></g><path d="M29.5 196V199M29.5 204V207M24 201.5H27M32 201.5H35" stroke="#e8e8e8" stroke-width="1.5"/><path d="M21 234 A9 8 0 0 1 38 232 M38 240 A9 8 0 0 1 21 242" fill="none" stroke="#e0e0e0" stroke-width="1.3"/><path d="M18.5 234H24.5L21.5 239Z M35 238H41L38 233Z" fill="#e0e0e0"/><path d="M29.5 232L33 236L29.5 240L26 236Z" fill="#b8b8b8"/><rect x="21" y="267" width="9" height="9" fill="#e0e0e0"/><path d="M24 265V261H38V275H32" fill="none" stroke="#d0d0d0" stroke-width="1.2"/><path d="M31 268L36.5 262.5M33 262.5H36.5V266" fill="none" stroke="#e0e0e0" stroke-width="1.2"/><path d="M46 286 V283 L43 286Z" fill="#9a9a9a"/><circle cx="29.5" cy="306" r="10" fill="none" stroke="#d8d8d8" stroke-width="1.3"/><rect x="25" y="301.5" width="9" height="9" fill="#e8e8e8"/><path d="M29.5 294L32 297H27Z M29.5 318L32 315H27Z M17.5 306L20.5 303.5V308.5Z M41.5 306L38.5 303.5V308.5Z" fill="#e8e8e8"/><path d="M20 348 L33 335 L36 338 L23 351 L19 352Z" fill="none" stroke="#e8e8e8" stroke-width="1.3"/><path d="M21 356 Q28 350 33 354 Q38 358 42 352" fill="none" stroke="#6ad0a8" stroke-width="1.3"/><path d="M46 361 V358 L43 361Z" fill="#9a9a9a"/><path d="M22 371V393H42" fill="none" stroke="#e0e0e0" stroke-width="1.6"/><path d="M23.5 391 V377 A14 14 0 0 1 38 391Z" fill="#78d6a6"/><path d="M22 393L22 391M25 393V390M28 393V391M31 393V390M34 393V391M37 393V390M40 393V391" stroke="#303030" stroke-width="0.8"/><path d="M23 417L31 411H40V426L33 432H23Z M23 417H33V432 M33 417L40 411" fill="none" stroke="#78d6a6" stroke-width="1.2"/><path d="M17.5 410H23.5M20.5 407V413" stroke="#78d6a6" stroke-width="1.6"/><path d="M46 436 V433 L43 436Z" fill="#9a9a9a"/><circle cx="1222.6" cy="155.6" r="8" fill="#6a3a44" stroke="#e83a50" stroke-width="1.6"/><circle cx="1268.2" cy="155.6" r="8" fill="#4a5a2a" stroke="#8ae000" stroke-width="1.6"/><circle cx="1246" cy="182" r="8" fill="#3a4a62" stroke="#2f7ad6" stroke-width="1.4"/><line x1="1245.6" y1="151.4" x2="1223.5" y2="146" stroke="#6a9a20" stroke-width="2.2"/><line x1="1245.6" y1="151.4" x2="1269" y2="146" stroke="#c83048" stroke-width="2.2"/><circle cx="1223.5" cy="146" r="8" fill="#6a9a20"/><circle cx="1269" cy="146" r="8" fill="#c03048"/><path d="M1220 141L1223.5 145.5L1227 141M1223.5 145.5V149" fill="none" stroke="#111" stroke-width="1.4"/><path d="M1265.5 141L1272.5 149M1272.5 141L1265.5 149" fill="none" stroke="#111" stroke-width="1.4"/><circle cx="1222.6" cy="155.6" r="8" fill="#6a3a44" stroke="#e83a50" stroke-width="1.6"/><circle cx="1268.2" cy="155.6" r="8" fill="#4f6a2a" stroke="#8ae000" stroke-width="1.6"/><line x1="1245.6" y1="151.4" x2="1245.6" y2="119" stroke="#2f7ad6" stroke-width="2.2"/><circle cx="1245.6" cy="119.2" r="8.2" fill="#2f7ad6"/><path d="M1241.8 114.8H1249.4L1241.8 123.6H1249.6" fill="none" stroke="#0a1a2a" stroke-width="1.5"/><circle cx="1274" cy="205.4" r="13.5" fill="#2f2f2f" fill-opacity="0.85"/><circle cx="1274" cy="235.6" r="13.5" fill="#2f2f2f" fill-opacity="0.85"/><circle cx="1274" cy="265.5" r="13.5" fill="#2f2f2f" fill-opacity="0.85"/><circle cx="1274" cy="295.5" r="13.5" fill="#2f2f2f" fill-opacity="0.85"/><circle cx="1272.5" cy="203.5" r="6" fill="#e0e0e0"/><path d="M1276.5 207.5L1281 212" stroke="#e0e0e0" stroke-width="2.2" stroke-linecap="round"/><path d="M1269.5 203.5H1275.5M1272.5 200.5V206.5" stroke="#2f2f2f" stroke-width="1.2"/><path d="M1268 236 Q1266.5 233 1268.5 232.5 L1271 236 V228 Q1272 226.5 1273 228 V235 V226.5 Q1274 225 1275 226.5 V235 V227.5 Q1276 226 1277 227.5 V235.5 V229.5 Q1278 228 1279 229.5 V238 Q1279 243 1274 243 Q1271 243 1269.5 240Z" fill="#e0e0e0"/><g fill="none" stroke="#e0e0e0" stroke-width="1"><path d="M1266.5 259 Q1266.5 256 1269.5 256 H1271 Q1273 258 1275 256 H1279 Q1282 256 1282 259 V260 Q1282 262.5 1279 262.5 H1269.5 Q1266.5 262.5 1266.5 260Z"/><rect x="1269" y="266" width="8" height="7"/><path d="M1277.5 269.5L1282 266.5V272.5Z"/></g><g fill="none" stroke="#e0e0e0" stroke-width="1.1"><path d="M1268 289H1280L1282 302H1266Z M1267 293.5H1281M1266.5 297.5H1281.5M1272 289L1271 302M1276 289L1277 302"/></g><rect x="1555.5" y="106.6" width="17" height="40.20000000000002" rx="4" fill="#3d3d3d" stroke="#222" stroke-width="1"/><rect x="1555.5" y="151.2" width="17" height="39.30000000000001" rx="4" fill="#282828" stroke="#222" stroke-width="1"/><rect x="1555.5" y="195" width="17" height="41.900000000000006" rx="4" fill="#282828" stroke="#222" stroke-width="1"/><rect x="1555.5" y="241.3" width="17" height="70.69999999999999" rx="4" fill="#282828" stroke="#222" stroke-width="1"/><rect x="1304.5" y="103.5" width="243" height="388" rx="5" fill="#383838" fill-opacity="0.96" stroke="#464646" stroke-width="1"/><path d="M1314.0 113.8 L1318 117.8 L1322.0 113.8" fill="none" stroke="#cfcfcf" stroke-width="1.2" stroke-linecap="round" stroke-linejoin="round"/><g fill="#777"><rect x="1528" y="114" width="1.2" height="1.2"/><rect x="1528" y="117" width="1.2" height="1.2"/><rect x="1531" y="114" width="1.2" height="1.2"/><rect x="1531" y="117" width="1.2" height="1.2"/><rect x="1534" y="114" width="1.2" height="1.2"/><rect x="1534" y="117" width="1.2" height="1.2"/><rect x="1537" y="114" width="1.2" height="1.2"/><rect x="1537" y="117" width="1.2" height="1.2"/></g><clipPath id="fc157"><rect x="1313.2" y="157.1" width="173.79999999999995" height="59" rx="4"/></clipPath><g clip-path="url(#fc157)"><g><rect x="1313.2" y="157.1" width="173.8" height="19.2" fill="#545454"/><rect x="1313.2" y="176.9" width="173.8" height="19.2" fill="#545454"/><rect x="1313.2" y="196.7" width="173.8" height="19.2" fill="#545454"/></g></g><g fill="none" stroke="#cfcfcf" stroke-width="1"><rect x="1514.8" y="165.1" width="7.5" height="6" rx="0.8"/><path d="M1515.8 165.1 V162.1 A2.6 2.6 0 0 1 1521 161.8"/></g><rect x="1518" y="167.2" width="1.2" height="1.6" fill="#cfcfcf"/><g fill="none" stroke="#cfcfcf" stroke-width="1"><rect x="1514.8" y="184.9" width="7.5" height="6" rx="0.8"/><path d="M1515.8 184.9 V181.9 A2.6 2.6 0 0 1 1521 181.6"/></g><rect x="1518" y="187.0" width="1.2" height="1.6" fill="#cfcfcf"/><g fill="none" stroke="#cfcfcf" stroke-width="1"><rect x="1514.8" y="204.7" width="7.5" height="6" rx="0.8"/><path d="M1515.8 204.7 V201.7 A2.6 2.6 0 0 1 1521 201.4"/></g><rect x="1518" y="206.8" width="1.2" height="1.6" fill="#cfcfcf"/><clipPath id="fc239"><rect x="1313.2" y="239.2" width="173.79999999999995" height="59" rx="4"/></clipPath><g clip-path="url(#fc239)"><g><rect x="1313.2" y="239.2" width="173.8" height="19.2" fill="#545454"/><rect x="1313.2" y="259.0" width="173.8" height="19.2" fill="#545454"/><rect x="1313.2" y="278.8" width="173.8" height="19.2" fill="#545454"/></g></g><g fill="none" stroke="#cfcfcf" stroke-width="1"><rect x="1514.8" y="247.2" width="7.5" height="6" rx="0.8"/><path d="M1515.8 247.2 V244.2 A2.6 2.6 0 0 1 1521 243.9"/></g><rect x="1518" y="249.3" width="1.2" height="1.6" fill="#cfcfcf"/><g fill="none" stroke="#cfcfcf" stroke-width="1"><rect x="1514.8" y="267.0" width="7.5" height="6" rx="0.8"/><path d="M1515.8 267.0 V264.0 A2.6 2.6 0 0 1 1521 263.7"/></g><rect x="1518" y="269.1" width="1.2" height="1.6" fill="#cfcfcf"/><g fill="none" stroke="#cfcfcf" stroke-width="1"><rect x="1514.8" y="286.8" width="7.5" height="6" rx="0.8"/><path d="M1515.8 286.8 V283.8 A2.6 2.6 0 0 1 1521 283.5"/></g><rect x="1518" y="288.9" width="1.2" height="1.6" fill="#cfcfcf"/><clipPath id="fc343"><rect x="1313.2" y="343.2" width="173.79999999999995" height="59" rx="4"/></clipPath><g clip-path="url(#fc343)"><g><rect x="1313.2" y="343.2" width="173.8" height="19.2" fill="#545454"/><rect x="1313.2" y="363.0" width="173.8" height="19.2" fill="#545454"/><rect x="1313.2" y="382.8" width="173.8" height="19.2" fill="#545454"/></g></g><g fill="none" stroke="#cfcfcf" stroke-width="1"><rect x="1514.8" y="351.2" width="7.5" height="6" rx="0.8"/><path d="M1515.8 351.2 V348.2 A2.6 2.6 0 0 1 1521 347.9"/></g><rect x="1518" y="353.3" width="1.2" height="1.6" fill="#cfcfcf"/><g fill="none" stroke="#cfcfcf" stroke-width="1"><rect x="1514.8" y="371.0" width="7.5" height="6" rx="0.8"/><path d="M1515.8 371.0 V368.0 A2.6 2.6 0 0 1 1521 367.7"/></g><rect x="1518" y="373.1" width="1.2" height="1.6" fill="#cfcfcf"/><g fill="none" stroke="#cfcfcf" stroke-width="1"><rect x="1514.8" y="390.8" width="7.5" height="6" rx="0.8"/><path d="M1515.8 390.8 V387.8 A2.6 2.6 0 0 1 1521 387.5"/></g><rect x="1518" y="392.9" width="1.2" height="1.6" fill="#cfcfcf"/><clipPath id="fdim"><rect x="1313.2" y="425.3" width="225.8" height="58" rx="4"/></clipPath><g clip-path="url(#fdim)"><g><rect x="1313.2" y="425.3" width="225.8" height="19.2" fill="#545454"/><rect x="1313.2" y="445.1" width="225.8" height="19.2" fill="#545454"/><rect x="1313.2" y="464.9" width="225.8" height="19.2" fill="#545454"/></g><rect x="1313.2" y="425.3" width="225.8" height="18.4" fill="#656565"/><rect x="1326" y="425.3" width="200" height="18.4" fill="#7a7a7a"/></g><path d="M1321 431L1318 434.5L1321 438M1532 431L1535 434.5L1532 438" fill="none" stroke="#e8e8e8" stroke-width="1.2"/><rect x="1313.2" y="301.2" width="225.8" height="17.5" rx="4" fill="#282828"/><path d="M1529.5 308.25 L1533 311.75 L1536.5 308.25" fill="none" stroke="#cfcfcf" stroke-width="1.2" stroke-linecap="round" stroke-linejoin="round"/></svg>
<span class="t" style="left:67.0px;top:112.3px;font-size:11.8px;color:#ececec;text-shadow:0 0 2px #000,1px 1px 1px #000;">User Perspective</span>
<span class="t" style="left:67.0px;top:130.3px;font-size:11.8px;color:#ececec;text-shadow:0 0 2px #000,1px 1px 1px #000;">(2) Scene Collection | Cylinder</span>
<span class="t" style="left:1326.6px;top:111.3px;font-size:11.8px;color:#e6e6e6;">Transform</span>
<span class="t" style="left:1313.2px;top:141.1px;font-size:11.8px;color:#d8d8d8;">Location:</span>
<span class="t" style="left:1313.2px;top:223.4px;font-size:11.8px;color:#d8d8d8;">Rotation:</span>
<span class="t" style="left:1313.2px;top:327.1px;font-size:11.8px;color:#d8d8d8;">Scale:</span>
<span class="t" style="left:1313.2px;top:409.1px;font-size:11.8px;color:#d8d8d8;">Dimensions:</span>
<span class="t" style="left:1327.8px;top:161.5px;font-size:11.8px;color:#e6e6e6;">X</span>
<span class="t" style="right:444.5px;top:161.5px;font-size:11.8px;color:#e6e6e6;">0 m</span>
<span class="t" style="left:1327.8px;top:181.3px;font-size:11.8px;color:#e6e6e6;">Y</span>
<span class="t" style="right:444.5px;top:181.3px;font-size:11.8px;color:#e6e6e6;">0 m</span>
<span class="t" style="left:1327.8px;top:201.1px;font-size:11.8px;color:#e6e6e6;">Z</span>
<span class="t" style="right:444.5px;top:201.1px;font-size:11.8px;color:#e6e6e6;">0 m</span>
<span class="t" style="left:1327.8px;top:243.6px;font-size:11.8px;color:#e6e6e6;">X</span>
<span class="t" style="right:444.5px;top:243.6px;font-size:11.8px;color:#e6e6e6;">0°</span>
<span class="t" style="left:1327.8px;top:263.4px;font-size:11.8px;color:#e6e6e6;">Y</span>
<span class="t" style="right:444.5px;top:263.4px;font-size:11.8px;color:#e6e6e6;">0°</span>
<span class="t" style="left:1327.8px;top:283.2px;font-size:11.8px;color:#e6e6e6;">Z</span>
<span class="t" style="right:444.5px;top:283.2px;font-size:11.8px;color:#e6e6e6;">29.917°</span>
<span class="t" style="left:1327.8px;top:347.6px;font-size:11.8px;color:#e6e6e6;">X</span>
<span class="t" style="right:444.5px;top:347.6px;font-size:11.8px;color:#e6e6e6;">1.000</span>
<span class="t" style="left:1327.8px;top:367.4px;font-size:11.8px;color:#e6e6e6;">Y</span>
<span class="t" style="right:444.5px;top:367.4px;font-size:11.8px;color:#e6e6e6;">1.000</span>
<span class="t" style="left:1327.8px;top:387.2px;font-size:11.8px;color:#e6e6e6;">Z</span>
<span class="t" style="right:444.5px;top:387.2px;font-size:11.8px;color:#e6e6e6;">1.000</span>
<span class="t" style="left:1327.8px;top:429.5px;font-size:11.8px;color:#f0f0f0;">X</span>
<span class="t" style="right:392.8px;top:429.5px;font-size:11.8px;color:#f0f0f0;">0.686 m</span>
<span class="t" style="left:1327.8px;top:449.1px;font-size:11.8px;color:#f0f0f0;">Y</span>
<span class="t" style="right:392.8px;top:449.1px;font-size:11.8px;color:#f0f0f0;">0.441 m</span>
<span class="t" style="left:1327.8px;top:468.7px;font-size:11.8px;color:#f0f0f0;">Z</span>
<span class="t" style="right:392.8px;top:468.7px;font-size:11.8px;color:#f0f0f0;">1.29 m</span>
<span class="t" style="left:1320.3px;top:304.8px;font-size:11.8px;color:#e6e6e6;">XYZ Euler</span>
<span class="t tc" style="left:1514px;top:120.7px;width:100px;font-size:12px;color:#f0f0f0;transform:rotate(90deg);transform-origin:50px 6px">Item</span>
<span class="t tc" style="left:1514px;top:164.85px;width:100px;font-size:12px;color:#b8b8b8;transform:rotate(90deg);transform-origin:50px 6px">Tool</span>
<span class="t tc" style="left:1514px;top:209.95px;width:100px;font-size:12px;color:#b8b8b8;transform:rotate(90deg);transform-origin:50px 6px">View</span>
<span class="t tc" style="left:1514px;top:270.65px;width:100px;font-size:12px;color:#b8b8b8;transform:rotate(90deg);transform-origin:50px 6px">Animation</span>
<svg style="left:0;top:0" width="1918" height="1149" viewBox="0 0 1918 1149"><rect x="1587.4" y="26.4" width="170.6" height="18.6" rx="4" fill="#282828" /><path d="M1618 26.4H1714 V45 H1618Z" fill="#1d1d1d"/><path d="M1718 26.4H1738V45H1718Z" fill="#3d3d3d"/><path d="M1738 26.4H1754 a4 4 0 0 1 4 4 V41 a4 4 0 0 1 -4 4 H1738Z" fill="#2b2b2b"/><path d="M1594 38 L1597 30 L1600 38 Q1600 41 1597 41 Q1594 41 1594 38Z" fill="#e0e0e0"/><circle cx="1602.5" cy="31" r="1.8" fill="#e0e0e0"/><circle cx="1601.5" cy="39" r="3" fill="#282828" stroke="#e0e0e0" stroke-width="1"/><path d="M1609.5 34.5 L1612.5 37.5 L1615.5 34.5" fill="none" stroke="#c8c8c8" stroke-width="1.2" stroke-linecap="round" stroke-linejoin="round"/><path d="M1702 41 L1706 37 M1704 33 L1710 39 M1706 31 L1712 37 L1709.5 38 L1705 33.5Z" fill="none" stroke="#8a8a8a" stroke-width="1"/><g fill="none" stroke="#d8d8d8" stroke-width="1"><rect x="1722.5" y="32.5" width="8" height="8.5"/><path d="M1725 32.5V30H1733.5V38.5H1730.5"/></g><path d="M1744 32 L1752 40 M1752 32 L1744 40" stroke="#5a5a5a" stroke-width="1"/><rect x="1764" y="26.4" width="151.0" height="18.6" rx="4" fill="#282828" /><path d="M1795 26.4H1875V45H1795Z" fill="#1d1d1d"/><path d="M1875 26.4H1895V45H1875Z" fill="#3d3d3d"/><path d="M1895 26.4H1911 a4 4 0 0 1 4 4 V41 a4 4 0 0 1 -4 4 H1895Z" fill="#2b2b2b"/><g fill="none" stroke="#d8d8d8" stroke-width="1"><rect x="1773.5" y="31.5" width="10" height="8" /><path d="M1771 34V42H1781M1769 36V44H1779"/></g><path d="M1774.5 39L1777.5 35L1780 38L1781 36.5L1783 39Z" fill="#d8d8d8"/><path d="M1786.0 34.5 L1789 37.5 L1792.0 34.5" fill="none" stroke="#c8c8c8" stroke-width="1.2" stroke-linecap="round" stroke-linejoin="round"/><g fill="none" stroke="#d8d8d8" stroke-width="1"><rect x="1879.5" y="32.5" width="8" height="8.5"/><path d="M1882 32.5V30H1890.5V38.5H1887.5"/></g><path d="M1901 32 L1909 40 M1909 32 L1901 40" stroke="#5a5a5a" stroke-width="1"/><rect x="1579" y="49.5" width="338" height="198" rx="7" fill="#282828"/><path d="M1579 56.5 a7 7 0 0 1 7 -7 H1910 a7 7 0 0 1 7 7 V75 H1579Z" fill="#2b2b2b"/><rect x="1579" y="96" width="338" height="20" fill="#2b2b2b"/><rect x="1579" y="136" width="338" height="20" fill="#2b2b2b"/><rect x="1579" y="176" width="338" height="20" fill="#2b2b2b"/><rect x="1579" y="216" width="338" height="20" fill="#2b2b2b"/><rect x="1588.6" y="51.6" width="30.8" height="18.4" rx="4" fill="#282828" stroke="#333" stroke-width="0.8"/><g fill="#e0e0e0"><rect x="1593" y="54.5" width="5" height="3"/><rect x="1599" y="59" width="8" height="3"/><rect x="1599" y="64.5" width="8" height="3"/></g><path d="M1595 57.5V66H1599M1595 60.5H1599" stroke="#e0e0e0" stroke-width="1" fill="none"/><path d="M1610.5 60.0 L1613.5 63.0 L1616.5 60.0" fill="none" stroke="#c8c8c8" stroke-width="1.2" stroke-linecap="round" stroke-linejoin="round"/><rect x="1625.4" y="51.6" width="31.2" height="18.4" rx="4" fill="#282828" stroke="#333" stroke-width="0.8"/><g fill="none" stroke="#d8d8d8" stroke-width="1"><rect x="1634.5" y="55.5" width="10" height="8"/><path d="M1632 58V66H1642M1630 60V68H1640"/></g><path d="M1635.5 63L1638.5 59L1641 62L1642 60.5L1644 63Z" fill="#d8d8d8"/><path d="M1647.5 60.0 L1650.5 63.0 L1653.5 60.0" fill="none" stroke="#c8c8c8" stroke-width="1.2" stroke-linecap="round" stroke-linejoin="round"/><rect x="1678.6" y="51.6" width="118.0" height="18.4" rx="4" fill="#1d1d1d" stroke="#333" stroke-width="0.8"/><circle cx="1688.5" cy="59.5" r="4.5" fill="none" stroke="#d8d8d8" stroke-width="1.2"/><path d="M1691.8 62.8L1696 67" stroke="#d8d8d8" stroke-width="1.3"/><rect x="1853" y="51.6" width="31.6" height="18.4" rx="4" fill="#282828" stroke="#333" stroke-width="0.8"/><path d="M1858 55 H1869 L1865 61 V68 L1862 66 V61Z" fill="none" stroke="#d8d8d8" stroke-width="1"/><path d="M1874.5 60.0 L1877.5 63.0 L1880.5 60.0" fill="none" stroke="#c8c8c8" stroke-width="1.2" stroke-linecap="round" stroke-linejoin="round"/><rect x="1890.6" y="51.6" width="18.4" height="18.4" rx="4" fill="#4a4a4a" /><g fill="none" stroke="#d0d0d0" stroke-width="1"><path d="M1894 60H1904V68H1894Z M1894 63H1904"/><circle cx="1903.5" cy="56.5" r="3.2" fill="#4a4a4a"/><path d="M1903.5 54.5V58.5M1901.5 56.5H1905.5"/></g><rect x="1579.5" y="50" width="337" height="197" rx="7" fill="none" stroke="#333" stroke-width="1"/><rect x="1600.6" y="78" width="18.8" height="18.0" rx="3" fill="#3a3a3a" stroke="#555" stroke-width="0.8"/><path d="M1604 82H1616V86H1604Z" fill="#e0e0e0"/><path d="M1605 87H1615V92H1605Z" fill="#e0e0e0"/><rect x="1608" y="88.5" width="4" height="1.3" fill="#3a3a3a"/><path d="M1608.5 102.5L1612 106.4L1608.5 110.3" fill="none" stroke="#bdbdbd" stroke-width="1.2"/><rect x="1620.6" y="97" width="18.8" height="19.0" rx="3" fill="#545454" stroke="#6a6a6a" stroke-width="0.8"/><path d="M1623.5 100H1636.5L1630 113Z" fill="#d88c4a"/><path d="M1627 102.5H1633L1630 109Z" fill="#545454"/><g transform="translate(1717.5 106.5) scale(0.95) rotate(-45)"><path d="M-7.5 -1.3 H1.5 A4.6 4.6 0 0 1 7 -4.2 L4.6 -1.6 L5.2 1.6 L7 4.2 A4.6 4.6 0 0 1 1.5 1.3 H-7.5 A1.3 1.3 0 0 1 -7.5 -1.3Z" fill="none" stroke="#7090e0" stroke-width="1.2" stroke-linejoin="round"/></g><g fill="none" stroke="#2fd4a0" stroke-width="1.2"><path d="M1733 101H1744L1738.5 112Z"/></g><g fill="#282828" stroke="#2fd4a0" stroke-width="1"><rect x="1731.5" y="99.5" width="3" height="3"/><rect x="1742.5" y="99.5" width="3" height="3"/><rect x="1737" y="110.5" width="3" height="3"/></g><path d="M1871.5 105.5 Q1878 98.5 1884.5 105.5 Q1878 112.5 1871.5 105.5Z" fill="#e8e8e8"/><circle cx="1878" cy="105.5" r="2.6" fill="#282828"/><circle cx="1878" cy="105.5" r="1.3" fill="#e8e8e8"/><path d="M1891.9 102.0 H1895.4 L1896.4 100.0 H1900.4 L1901.4 102.0 H1904.9 V110.5 H1891.9Z" fill="#e8e8e8"/><circle cx="1898.4" cy="106.3" r="3" fill="#282828"/><circle cx="1898.4" cy="106.3" r="1.6" fill="#e8e8e8"/><path d="M1608.5 122.5L1612 126.4L1608.5 130.3" fill="none" stroke="#bdbdbd" stroke-width="1.2"/><rect x="1623" y="119" width="14" height="14" fill="#d88c4a"/><path d="M1625 131L1629.5 123L1634 131Z" fill="#282828"/><circle cx="1633" cy="122.5" r="1.3" fill="#282828"/><rect x="1701" y="119.5" width="14" height="13" fill="none" stroke="#c94f5e" stroke-width="1"/><path d="M1702 132L1706.5 124L1711 132Z" fill="#c94f5e"/><circle cx="1710.5" cy="123" r="1.3" fill="#c94f5e"/><path d="M1871.5 125.5 Q1878 118.5 1884.5 125.5 Q1878 132.5 1871.5 125.5Z" fill="#e8e8e8"/><circle cx="1878" cy="125.5" r="2.6" fill="#282828"/><circle cx="1878" cy="125.5" r="1.3" fill="#e8e8e8"/><path d="M1891.9 122.0 H1895.4 L1896.4 120.0 H1900.4 L1901.4 122.0 H1904.9 V130.5 H1891.9Z" fill="#e8e8e8"/><circle cx="1898.4" cy="126.3" r="3" fill="#282828"/><circle cx="1898.4" cy="126.3" r="1.6" fill="#e8e8e8"/><path d="M1608.5 142.5L1612 146.4L1608.5 150.3" fill="none" stroke="#8a8a8a" stroke-width="1.2"/><g fill="none" stroke="#8c5a34" stroke-width="2.2" stroke-linecap="round"><path d="M1624 142H1637M1630.5 142L1628 152M1630.5 142L1634 152"/></g><circle cx="1630.5" cy="139.5" r="2" fill="#8c5a34"/><g fill="none" stroke="#1f9e78" stroke-width="1.1"><path d="M1708 139 L1713 143 L1719 142 M1713 143 L1710 152 M1713 143 L1717 147 L1720 152 M1711 146 L1707 149"/></g><circle cx="1714.5" cy="139" r="1.3" fill="#1f9e78"/><g fill="none" stroke="#1f9e78" stroke-width="1.1"><path d="M1729 141 H1740 M1734.5 141 L1732 152 M1734.5 141 L1737 152"/><rect x="1727.5" y="139" width="2.5" height="2.5"/></g><circle cx="1734.5" cy="138.5" r="1.3" fill="#1f9e78"/><path d="M1872 146 Q1878 151 1884 146" fill="none" stroke="#bdbdbd" stroke-width="1.1"/><path d="M1891.9 142.0 H1895.4 L1896.4 140.0 H1900.4 L1901.4 142.0 H1904.9 V150.5 H1891.9Z" fill="#e8e8e8"/><circle cx="1898.4" cy="146.3" r="3" fill="#282828"/><circle cx="1898.4" cy="146.3" r="1.6" fill="#e8e8e8"/><rect x="1579" y="250" width="338" height="878.5" rx="7" fill="#303030"/><path d="M1579 276H1608V1128.5H1586 a7 7 0 0 1 -7 -7Z" fill="#1a1a1a"/><rect x="1588.6" y="253" width="30.8" height="18.0" rx="4" fill="#282828" stroke="#3a3a3a" stroke-width="0.8"/><rect x="1594" y="255.5" width="13" height="5.5" rx="2.7" fill="#e8e8e8"/><rect x="1594" y="262.8" width="13" height="5.5" rx="2.7" fill="#e8e8e8"/><rect x="1598.5" y="256.7" width="6.5" height="3.1" rx="1.5" fill="#282828"/><rect x="1596" y="264" width="6.5" height="3.1" rx="1.5" fill="#282828"/><path d="M1610.5 260.5 L1613.5 263.5 L1616.5 260.5" fill="none" stroke="#c8c8c8" stroke-width="1.2" stroke-linecap="round" stroke-linejoin="round"/><rect x="1690.6" y="253" width="117.4" height="18.0" rx="4" fill="#1d1d1d" stroke="#3a3a3a" stroke-width="0.8"/><circle cx="1701.0" cy="260.5" r="4.5" fill="none" stroke="#d8d8d8" stroke-width="1.2"/><path d="M1704.3 263.8L1708.5 268" stroke="#d8d8d8" stroke-width="1.3"/><rect x="1890" y="253" width="19.0" height="18.0" rx="4" fill="#282828" stroke="#3a3a3a" stroke-width="0.8"/><path d="M1896.0 260.25 L1899.5 263.75 L1903.0 260.25" fill="none" stroke="#c8c8c8" stroke-width="1.2" stroke-linecap="round" stroke-linejoin="round"/><rect x="1581" y="284" width="31.0" height="28.0" rx="5" fill="#202020" /><rect x="1581" y="320" width="31.0" height="140.0" rx="5" fill="#202020" /><rect x="1581" y="467" width="31.0" height="197.0" rx="5" fill="#202020" /><rect x="1608" y="276" width="309" height="852" fill="#303030"/><path d="M1581 501 a4 4 0 0 1 4 -4 H1608 V524 H1585 a4 4 0 0 1 -4 -4Z" fill="#303030"/><g fill="#bcbcbc"><rect x="1589.5" y="293" width="1.3" height="7"/><circle cx="1590" cy="302.5" r="2.3"/><path d="M1597 290 Q1595 293 1597.5 295 V304 Q1597.5 305.5 1599 305.5 Q1600.5 305.5 1600.5 304 V295 Q1603 293 1601 290 V293 H1597.5Z"/></g><g fill="none" stroke="#bcbcbc" stroke-width="1.2"><rect x="1587.5" y="329" width="14" height="9.5"/><path d="M1590.5 329V326.5H1598.5V329"/></g><rect x="1597" y="331" width="3" height="3" fill="#bcbcbc"/><path d="M1587.5 357.5H1601.5V364H1599V368H1590V364H1587.5Z" fill="#bcbcbc"/><rect x="1589.5" y="354.5" width="10" height="2" fill="#bcbcbc"/><path d="M1591 366L1593.5 362.5L1596 365L1597 364L1598.5 366Z" fill="#202020"/><g fill="none" stroke="#bcbcbc" stroke-width="1"><rect x="1591.5" y="383.5" width="10" height="8"/><path d="M1589.5 386V394H1599.5M1587.5 388V396H1597.5"/></g><path d="M1587.5 421 L1590 414 L1592.5 421 Q1592.5 423.5 1590 423.5 Q1587.5 423.5 1587.5 421Z" fill="#bcbcbc"/><circle cx="1597" cy="413.5" r="1.8" fill="#bcbcbc"/><circle cx="1595.5" cy="421" r="3" fill="none" stroke="#bcbcbc" stroke-width="1.1"/><circle cx="1594.5" cy="445.5" r="6" fill="none" stroke="#c05060" stroke-width="1.3"/><path d="M1590 442 Q1593 444 1592 447 Q1596 448 1596 451 M1597 440 Q1596 443 1599 444" fill="none" stroke="#c05060" stroke-width="1.3"/><g fill="none" stroke="#c07a40" stroke-width="1.1"><path d="M1587.5 478V475.5H1590M1599 475.5H1601.5V478M1601.5 486V488.5H1599M1590 488.5H1587.5V486"/></g><rect x="1590.5" y="478.5" width="8" height="7.5" fill="#d08c52"/><g transform="translate(1595 510) scale(1.0) rotate(-45)"><rect x="-8" y="-1.6" width="10" height="3.2" rx="1.6" fill="#6a9af0"/><circle cx="3.6" cy="0" r="4.4" fill="#6a9af0"/><path d="M5 -1.6 H9 V1.6 H5Z" fill="#303030"/></g><g fill="none" stroke="#4f8fd8" stroke-width="1.2"><path d="M1590 532 L1599 530 M1590 532 L1599 541"/></g><g fill="#4f8fd8"><circle cx="1590" cy="532" r="2.2"/><circle cx="1599.5" cy="530" r="1.8"/><circle cx="1599.5" cy="541" r="1.8"/><circle cx="1590" cy="540" r="1.3"/></g><circle cx="1593.5" cy="566" r="5.5" fill="none" stroke="#4f8fd8" stroke-width="1.4"/><circle cx="1593.5" cy="566" r="2.5" fill="#4f8fd8"/><circle cx="1599.5" cy="560" r="1.6" fill="#4f8fd8"/><path d="M1590 599 Q1586 593 1592 590 L1598 587 Q1601 590 1599 594 Z" fill="none" stroke="#4f8fd8" stroke-width="1.3"/><circle cx="1593.5" cy="594" r="2" fill="#4f8fd8"/><g fill="none" stroke="#2fd4a0" stroke-width="1.2"><path d="M1589 615.5H1599.5L1594.5 627Z"/></g><g fill="#1d1d1d" stroke="#2fd4a0" stroke-width="1"><rect x="1587.5" y="614" width="3" height="3"/><rect x="1598" y="614" width="3" height="3"/><rect x="1593" y="625.5" width="3" height="3"/></g><circle cx="1594.5" cy="649.2" r="6.3" fill="#c86070"/><path d="M1594.5 642.9 V649.2 H1600.8 A6.3 6.3 0 0 0 1594.5 642.9Z M1588.2 649.2 H1594.5 V655.5 A6.3 6.3 0 0 1 1588.2 649.2Z" fill="#2a2a2a"/><path d="M1591.5 678.5 L1594.5 681.5 L1597.5 678.5" fill="none" stroke="#6a6a6a" stroke-width="1.2" stroke-linecap="round" stroke-linejoin="round"/><rect x="1579.5" y="250.5" width="337" height="878" rx="7" fill="none" stroke="#2e2e2e" stroke-width="1"/><g fill="none" stroke="#cfcfcf" stroke-width="1"><path d="M1619 290V287H1622M1630 287H1633V290M1633 298V301H1630M1622 301H1619V298"/></g><rect x="1621.5" y="289.5" width="9" height="9" fill="#cfcfcf"/><path d="M1703 290L1707 294L1703 298" fill="none" stroke="#cfcfcf" stroke-width="1.1"/><g fill="none" stroke="#cfcfcf" stroke-width="1"><path d="M1722.5 288 Q1718 286 1717 290 Q1719 294 1717 298 Q1718 302 1722.5 300"/><path d="M1725.5 288 Q1730 286 1731 290 Q1729 294 1731 298 Q1730 302 1725.5 300"/><path d="M1724 286V302" stroke-dasharray="2 1.5"/></g><path d="M1891 303 L1895 299 M1893 295 L1899.5 301.5 M1896 292.5 L1902 298.5 L1899.5 299.5 L1895 295Z" fill="none" stroke="#8a8a8a" stroke-width="1"/><rect x="1617" y="320.6" width="292.0" height="18.8" rx="4" fill="#4f4f4f" /><path d="M1628.5 325V335M1623.5 330H1633.5" stroke="#e0e0e0" stroke-width="1.2"/><rect x="1617.5" y="350.5" width="291" height="225" rx="5" fill="#383838" stroke="#4772b3" stroke-width="1.1"/><path d="M1625.0 361.0 L1629 365.0 L1633.0 361.0" fill="none" stroke="#cfcfcf" stroke-width="1.2" stroke-linecap="round" stroke-linejoin="round"/><g fill="none" stroke="#cfcfcf" stroke-width="1"><path d="M1644.0 357 Q1639.5 355 1638.5 359 Q1640.5 363 1638.5 367 Q1639.5 371 1644.0 369"/><path d="M1647.0 357 Q1651.5 355 1652.5 359 Q1650.5 363 1652.5 367 Q1651.5 371 1647.0 369"/><path d="M1645.5 355V371" stroke-dasharray="2 1.5"/></g><rect x="1665" y="354.4" width="193.0" height="17.2" rx="4" fill="#1d1d1d" /><rect x="1759" y="354.4" width="20" height="17.2" fill="#4f4f4f"/><rect x="1779.8" y="354.4" width="19.2" height="17.2" fill="#4772b3"/><rect x="1800" y="354.4" width="19" height="17.2" fill="#4772b3"/><rect x="1820" y="354.4" width="19" height="17.2" fill="#4772b3"/><g fill="none" stroke="#e8e8e8" stroke-width="1"><path d="M1764 358.5H1774L1769 368Z"/></g><g fill="#4f4f4f" stroke="#e8e8e8" stroke-width="0.9"><rect x="1762.5" y="357" width="2.6" height="2.6"/><rect x="1772.5" y="357" width="2.6" height="2.6"/><rect x="1767.7" y="366.5" width="2.6" height="2.6"/></g><g fill="none" stroke="#e8e8e8" stroke-width="1"><path d="M1784 359V367H1793M1786 358H1794V366"/></g><rect x="1792.5" y="356.5" width="3.5" height="3.5" fill="#fff"/><g fill="#4772b3" stroke="#e8e8e8" stroke-width="0.8"><rect x="1782.5" y="357.5" width="2.5" height="2.5"/><rect x="1782.5" y="366" width="2.5" height="2.5"/><rect x="1792.5" y="366" width="2.5" height="2.5"/></g><rect x="1803" y="357" width="13" height="8.5" rx="1" fill="none" stroke="#f0f0f0" stroke-width="1.2"/><rect x="1805" y="359" width="9" height="4.5" fill="#f0f0f0"/><path d="M1809.5 365.5V368.5M1806 369H1813" stroke="#f0f0f0" stroke-width="1.2"/><path d="M1822.5 359H1826L1827 357H1832L1833 359H1836.5V368.5H1822.5Z" fill="#f0f0f0"/><circle cx="1829.5" cy="363.5" r="3" fill="#4772b3"/><circle cx="1829.5" cy="363.5" r="1.6" fill="#f0f0f0"/><path d="M1845.0 361.0 L1849 365.0 L1853.0 361.0" fill="none" stroke="#e0e0e0" stroke-width="1.2" stroke-linecap="round" stroke-linejoin="round"/><path d="M1866 359L1874 367M1874 359L1866 367" stroke="#d8d8d8" stroke-width="1.2"/><g fill="#6a6a6a"><rect x="1890" y="361" width="1.2" height="1.2"/><rect x="1890" y="364" width="1.2" height="1.2"/><rect x="1893" y="361" width="1.2" height="1.2"/><rect x="1893" y="364" width="1.2" height="1.2"/><rect x="1896" y="361" width="1.2" height="1.2"/><rect x="1896" y="364" width="1.2" height="1.2"/><rect x="1899" y="361" width="1.2" height="1.2"/><rect x="1899" y="364" width="1.2" height="1.2"/></g><clipPath id="c384"><rect x="1733" y="384" width="148" height="17.600000000000023" rx="4"/></clipPath><g clip-path="url(#c384)"><rect x="1733" y="384" width="48" height="17.600000000000023" fill="#4772b3"/><rect x="1781.6" y="384" width="49.40000000000009" height="17.600000000000023" fill="#545454"/><rect x="1831.6" y="384" width="49.40000000000009" height="17.600000000000023" fill="#545454"/></g><clipPath id="c406"><rect x="1733" y="406" width="148" height="17.600000000000023" rx="4"/></clipPath><g clip-path="url(#c406)"><rect x="1733" y="406" width="48" height="17.600000000000023" fill="#545454"/><rect x="1781.6" y="406" width="49.40000000000009" height="17.600000000000023" fill="#545454"/><rect x="1831.6" y="406" width="49.40000000000009" height="17.600000000000023" fill="#545454"/></g><clipPath id="c428"><rect x="1733" y="428" width="148" height="17.600000000000023" rx="4"/></clipPath><g clip-path="url(#c428)"><rect x="1733" y="428" width="48" height="17.600000000000023" fill="#444444"/><rect x="1781.6" y="428" width="49.40000000000009" height="17.600000000000023" fill="#444444"/><rect x="1831.6" y="428" width="49.40000000000009" height="17.600000000000023" fill="#444444"/></g><rect x="1733" y="458.4" width="148.0" height="17.1" rx="4" fill="#1d1d1d" /><g fill="none" stroke="#e0e0e0" stroke-width="1"><path d="M1737 463V460H1740M1748 460H1751V463M1751 471V474H1748M1740 474H1737V471"/></g><rect x="1739.5" y="462.5" width="9" height="9" fill="#e0e0e0"/><path d="M1866 462.5L1874 470.5M1874 462.5L1866 470.5" stroke="#d8d8d8" stroke-width="1.1"/><rect x="1733" y="483.3" width="11.7" height="11.7" rx="3" fill="#4772b3" /><path d="M1735.5 489 L1738.3 492 L1742.5 486" fill="none" stroke="#fff" stroke-width="1.5"/><circle cx="1891.9" cy="489" r="1.6" fill="#e0e0e0"/><rect x="1733" y="505" width="11.7" height="11.7" rx="3" fill="#4772b3" /><path d="M1735.5 510.7 L1738.3 513.7 L1742.5 507.7" fill="none" stroke="#fff" stroke-width="1.5"/><rect x="1753" y="502.3" width="128.0" height="18.0" rx="4" fill="#545454" /><circle cx="1891.9" cy="511" r="1.6" fill="#e0e0e0"/><rect x="1733" y="524.7" width="148.0" height="17.5" rx="4" fill="#444444" /><circle cx="1891.9" cy="533.5" r="1.5" fill="#5a5a5a"/><path d="M1641.5 559.7L1645.5 563.7L1641.5 567.7" fill="none" stroke="#cfcfcf" stroke-width="1.1"/></svg>
<span class="t" style="left:1626.0px;top:30.8px;font-size:11.8px;color:#e6e6e6;">Scene</span>
<span class="t" style="left:1802.6px;top:30.8px;font-size:11.8px;color:#e6e6e6;">ViewLayer</span>
<span class="t" style="left:1704.0px;top:56.3px;font-size:11.8px;color:#6e6e6e;">Search</span>
<span class="t" style="left:1624.4px;top:82.1px;font-size:11.8px;color:#e6e6e6;">Scene Collection</span>
<span class="t" style="left:1644.0px;top:101.8px;font-size:11.8px;color:#e6e6e6;">Cylinder</span>
<span class="t" style="left:1644.0px;top:121.8px;font-size:11.8px;color:#e6e6e6;">Empty</span>
<span class="t" style="left:1644.0px;top:141.8px;font-size:11.8px;color:#8a8a8a;">metarig</span>
<span class="t" style="left:1716.0px;top:257.3px;font-size:11.8px;color:#6e6e6e;">Search</span>
<span class="t" style="left:1642.0px;top:289.4px;font-size:11.8px;color:#e6e6e6;">Cylinder</span>
<span class="t" style="left:1741.0px;top:289.4px;font-size:11.8px;color:#e6e6e6;">Mirror</span>
<span class="t tc" style="left:1471.0px;width:600px;top:325.0px;font-size:11.8px;color:#e6e6e6;">Add Modifier</span>
<span class="t" style="left:1672.0px;top:358.0px;font-size:11.8px;color:#e6e6e6;">Mirror</span>
<span class="t" style="right:195.4px;top:388.0px;font-size:11.8px;color:#e0e0e0;">Axis</span>
<span class="t" style="right:195.4px;top:410.0px;font-size:11.8px;color:#e0e0e0;">Bisect</span>
<span class="t" style="right:195.4px;top:432.0px;font-size:11.8px;color:#8a8a8a;">Flip</span>
<span class="t" style="right:195.4px;top:462.1px;font-size:11.8px;color:#e0e0e0;">Mirror Object</span>
<span class="t" style="right:195.4px;top:506.1px;font-size:11.8px;color:#e0e0e0;">Merge</span>
<span class="t" style="right:195.4px;top:527.8px;font-size:11.8px;color:#8a8a8a;">Bisect Distance</span>
<span class="t tc" style="left:1457.0px;width:600px;top:388.0px;font-size:11.8px;color:#f0f0f0;">X</span>
<span class="t tc" style="left:1506.3px;width:600px;top:388.0px;font-size:11.8px;color:#f0f0f0;">Y</span>
<span class="t tc" style="left:1556.3px;width:600px;top:388.0px;font-size:11.8px;color:#f0f0f0;">Z</span>
<span class="t tc" style="left:1457.0px;width:600px;top:410.0px;font-size:11.8px;color:#e0e0e0;">X</span>
<span class="t tc" style="left:1506.3px;width:600px;top:410.0px;font-size:11.8px;color:#e0e0e0;">Y</span>
<span class="t tc" style="left:1556.3px;width:600px;top:410.0px;font-size:11.8px;color:#e0e0e0;">Z</span>
<span class="t tc" style="left:1457.0px;width:600px;top:432.0px;font-size:11.8px;color:#8a8a8a;">X</span>
<span class="t tc" style="left:1506.3px;width:600px;top:432.0px;font-size:11.8px;color:#8a8a8a;">Y</span>
<span class="t tc" style="left:1556.3px;width:600px;top:432.0px;font-size:11.8px;color:#8a8a8a;">Z</span>
<span class="t" style="left:1758.0px;top:462.1px;font-size:11.8px;color:#e6e6e6;">Empty</span>
<span class="t" style="left:1749.0px;top:484.1px;font-size:11.8px;color:#e6e6e6;">Clipping</span>
<span class="t tc" style="left:1516.0px;width:600px;top:506.1px;font-size:11.8px;color:#e6e6e6;">0.001 m</span>
<span class="t tc" style="left:1506.0px;width:600px;top:527.8px;font-size:11.8px;color:#8a8a8a;">0.001 m</span>
<span class="t" style="left:1652.4px;top:559.4px;font-size:11.8px;color:#e6e6e6;">Data</span>
<svg style="left:0;top:0" width="1918" height="1149" viewBox="0 0 1918 1149"><clipPath id="tlclip"><rect x="2" y="1051" width="1573.5" height="77.5" rx="7"/></clipPath><g clip-path="url(#tlclip)"><rect x="2" y="1051" width="1574" height="78" fill="#2b2b2b"/><rect x="2" y="1051" width="1574" height="26" fill="#303030"/><rect x="2" y="1077" width="1574" height="22.5" fill="#1d1d1d"/><rect x="2" y="1099.5" width="58.6" height="30" fill="#232323"/><rect x="1517.3" y="1099.5" width="58.7" height="30" fill="#232323"/><rect x="19.2" y="1099.5" width="1" height="30" fill="#262626"/><rect x="54.3" y="1099.5" width="1" height="30" fill="#1e1e1e"/><rect x="89.4" y="1099.5" width="1" height="30" fill="#262626"/><rect x="124.5" y="1099.5" width="1" height="30" fill="#1e1e1e"/><rect x="159.6" y="1099.5" width="1" height="30" fill="#262626"/><rect x="194.7" y="1099.5" width="1" height="30" fill="#1e1e1e"/><rect x="229.8" y="1099.5" width="1" height="30" fill="#262626"/><rect x="264.9" y="1099.5" width="1" height="30" fill="#1e1e1e"/><rect x="300.0" y="1099.5" width="1" height="30" fill="#262626"/><rect x="335.1" y="1099.5" width="1" height="30" fill="#1e1e1e"/><rect x="370.2" y="1099.5" width="1" height="30" fill="#262626"/><rect x="405.3" y="1099.5" width="1" height="30" fill="#1e1e1e"/><rect x="440.4" y="1099.5" width="1" height="30" fill="#262626"/><rect x="475.5" y="1099.5" width="1" height="30" fill="#1e1e1e"/><rect x="510.6" y="1099.5" width="1" height="30" fill="#262626"/><rect x="545.7" y="1099.5" width="1" height="30" fill="#1e1e1e"/><rect x="580.8" y="1099.5" width="1" height="30" fill="#262626"/><rect x="615.9" y="1099.5" width="1" height="30" fill="#1e1e1e"/><rect x="651.0" y="1099.5" width="1" height="30" fill="#262626"/><rect x="686.1" y="1099.5" width="1" height="30" fill="#1e1e1e"/><rect x="721.2" y="1099.5" width="1" height="30" fill="#262626"/><rect x="756.3" y="1099.5" width="1" height="30" fill="#1e1e1e"/><rect x="791.4" y="1099.5" width="1" height="30" fill="#262626"/><rect x="826.5" y="1099.5" width="1" height="30" fill="#1e1e1e"/><rect x="861.6" y="1099.5" width="1" height="30" fill="#262626"/><rect x="896.7" y="1099.5" width="1" height="30" fill="#1e1e1e"/><rect x="931.8" y="1099.5" width="1" height="30" fill="#262626"/><rect x="966.9" y="1099.5" width="1" height="30" fill="#1e1e1e"/><rect x="1002.0" y="1099.5" width="1" height="30" fill="#262626"/><rect x="1037.1" y="1099.5" width="1" height="30" fill="#1e1e1e"/><rect x="1072.2" y="1099.5" width="1" height="30" fill="#262626"/><rect x="1107.3" y="1099.5" width="1" height="30" fill="#1e1e1e"/><rect x="1142.4" y="1099.5" width="1" height="30" fill="#262626"/><rect x="1177.5" y="1099.5" width="1" height="30" fill="#1e1e1e"/><rect x="1212.6" y="1099.5" width="1" height="30" fill="#262626"/><rect x="1247.7" y="1099.5" width="1" height="30" fill="#1e1e1e"/><rect x="1282.8" y="1099.5" width="1" height="30" fill="#262626"/><rect x="1317.9" y="1099.5" width="1" height="30" fill="#1e1e1e"/><rect x="1353.0" y="1099.5" width="1" height="30" fill="#262626"/><rect x="1388.1" y="1099.5" width="1" height="30" fill="#1e1e1e"/><rect x="1423.2" y="1099.5" width="1" height="30" fill="#262626"/><rect x="1458.3" y="1099.5" width="1" height="30" fill="#1e1e1e"/><rect x="1493.4" y="1099.5" width="1" height="30" fill="#262626"/><rect x="1528.5" y="1099.5" width="1" height="30" fill="#1e1e1e"/><rect x="1563.6" y="1099.5" width="1" height="30" fill="#262626"/><rect x="1598.7" y="1099.5" width="1" height="30" fill="#1e1e1e"/><rect x="59.9" y="1099.5" width="1.4" height="30" fill="#0e0e0e"/><rect x="1516.6" y="1099.5" width="1.4" height="30" fill="#0e0e0e"/><rect x="12" y="1123" width="1553" height="3" rx="1.5" fill="#383838"/><rect x="1570" y="1102.5" width="2.5" height="23" rx="1.2" fill="#383838"/><path d="M2 1104 H6 a5 5 0 0 1 5 5 V1114 a5 5 0 0 1 -5 5 H2Z" fill="#222"/><path d="M4.5 1103.5L8 1107.5L4.5 1111.5" fill="none" stroke="#9a9a9a" stroke-width="1.1"/></g><rect x="10" y="1054.5" width="31.0" height="18.8" rx="4" fill="#282828" stroke="#3a3a3a" stroke-width="0.6"/><circle cx="21.5" cy="1064" r="6.8" fill="#e8e8e8"/><path d="M23.5 1059.5L20 1064L23.5 1068.5" fill="none" stroke="#282828" stroke-width="2"/><path d="M32.0 1063.0 L35 1066.0 L38.0 1063.0" fill="none" stroke="#c8c8c8" stroke-width="1.2" stroke-linecap="round" stroke-linejoin="round"/><rect x="145" y="1054.5" width="70.0" height="18.8" rx="4" fill="#282828" stroke="#3a3a3a" stroke-width="0.6"/><path d="M206.0 1063.0 L209 1066.0 L212.0 1063.0" fill="none" stroke="#c8c8c8" stroke-width="1.2" stroke-linecap="round" stroke-linejoin="round"/><rect x="641.7" y="1055" width="38.3" height="18.4" rx="4" fill="#282828" /><path d="M641.7 1059 a4 4 0 0 1 4 -4 H660 V1073.4 H645.7 a4 4 0 0 1 -4 -4Z" fill="#4a4a4a"/><circle cx="651" cy="1064.2" r="5" fill="none" stroke="#cfcfcf" stroke-width="1.1"/><path d="M667.0 1063.0 L670 1066.0 L673.0 1063.0" fill="none" stroke="#6a6a6a" stroke-width="1.2" stroke-linecap="round" stroke-linejoin="round"/><rect x="686.7" y="1055" width="118.5" height="18.4" rx="4" fill="#4a4a4a" /><rect x="706.0" y="1055" width="1" height="18.4" fill="#3a3a3a"/><rect x="725.7" y="1055" width="1" height="18.4" fill="#3a3a3a"/><rect x="745.5" y="1055" width="1" height="18.4" fill="#3a3a3a"/><rect x="765.2" y="1055" width="1" height="18.4" fill="#3a3a3a"/><rect x="785.0" y="1055" width="1" height="18.4" fill="#3a3a3a"/><g fill="#e8e8e8"><rect x="692.5" y="1059" width="1.6" height="10"/><path d="M703 1059V1069L695.5 1064Z"/><path d="M707 1064L710.5 1060L714 1064L710.5 1068Z M714.5 1064L721 1059.5V1068.5Z"/><path d="M740 1059V1069L732 1064Z"/><path d="M752 1059V1069L760 1064Z"/><path d="M766 1059.5V1068.5L772.5 1064Z M773 1064L776.5 1060L780 1064L776.5 1068Z"/><path d="M792 1059V1069L799.5 1064Z"/><rect x="800" y="1059" width="1.6" height="10"/></g><rect x="811.9" y="1055" width="58.3" height="18.4" rx="4" fill="#282828" /><path d="M811.9 1059 a4 4 0 0 1 4 -4 H850 V1073.4 H815.9 a4 4 0 0 1 -4 -4Z" fill="#4a4a4a"/><rect x="830.5" y="1055" width="1" height="18.4" fill="#3a3a3a"/><g fill="#e8e8e8"><path d="M826 1059.5V1068.5L819.5 1064Z"/><rect x="826.5" y="1059.5" width="1.6" height="9"/><rect x="835" y="1059.5" width="1.6" height="9"/><path d="M837.5 1059.5V1068.5L844 1064Z"/></g><path d="M857.0 1063.0 L860 1066.0 L863.0 1063.0" fill="none" stroke="#c8c8c8" stroke-width="1.2" stroke-linecap="round" stroke-linejoin="round"/><rect x="877" y="1055" width="38.3" height="18.4" rx="4" fill="#282828" /><path d="M877 1059 a4 4 0 0 1 4 -4 H896 V1073.4 H881 a4 4 0 0 1 -4 -4Z" fill="#4a4a4a"/><path d="M881.5 1070V1064 A5 5 0 0 1 891.5 1064V1070" fill="none" stroke="#cfcfcf" stroke-width="1.2"/><path d="M880 1071H893" stroke="#cfcfcf" stroke-width="1"/><path d="M903.0 1063.0 L906 1066.0 L909.0 1063.0" fill="none" stroke="#c8c8c8" stroke-width="1.2" stroke-linecap="round" stroke-linejoin="round"/><rect x="1237.7" y="1055" width="73.5" height="18.3" rx="4" fill="#545454" /><rect x="1317.6" y="1055" width="193.4" height="18.3" rx="4" fill="#545454" /><path d="M1317.6 1059 a4 4 0 0 1 4 -4 H1336.8 V1073.3 H1321.6 a4 4 0 0 1 -4 -4Z" fill="#4a4a4a"/><rect x="1336.3" y="1055" width="1" height="18.3" fill="#3f3f3f"/><rect x="1424.8" y="1055" width="1" height="18.3" fill="#3f3f3f"/><circle cx="1327" cy="1065" r="5.2" fill="none" stroke="#d8d8d8" stroke-width="1.1"/><path d="M1327 1061.5V1065.3H1329.8M1325 1058.3H1329M1331.5 1059.5L1333 1058" fill="none" stroke="#d8d8d8" stroke-width="1.1"/><rect x="1528.9" y="1055" width="38.3" height="18.3" rx="4" fill="#282828" /><path d="M1528.9 1059 a4 4 0 0 1 4 -4 H1547.2 V1073.3 H1532.9 a4 4 0 0 1 -4 -4Z" fill="#4772b3"/><circle cx="1539.5" cy="1062" r="4.5" fill="#f0f0f0"/><path d="M1533.5 1063.5 A5 5 0 1 0 1541.5 1068.5" fill="none" stroke="#f0f0f0" stroke-width="1.2"/><path d="M1554.2 1063.0 L1557.2 1066.0 L1560.2 1063.0" fill="none" stroke="#c8c8c8" stroke-width="1.2" stroke-linecap="round" stroke-linejoin="round"/><rect x="64.7" y="1098" width="3.6" height="31" fill="#4772b3"/><path d="M55.0 1083 a4 4 0 0 1 4 -4 H74.0 a4 4 0 0 1 4 4 V1096 a2 2 0 0 1 -2 2 L69.0 1103 H64.0 L57.0 1098 a2 2 0 0 1 -2 -2Z" fill="#4772b3"/><rect x="2.5" y="1051.5" width="1573" height="77" rx="7" fill="none" stroke="#3a3a3a" stroke-width="1"/><rect x="6.5" y="1133.5" width="10" height="14" rx="3" fill="none" stroke="#9a9a9a" stroke-width="1"/><rect x="9.5" y="1135" width="4" height="6" rx="1" fill="#9a9a9a"/></svg>
<span class="t" style="left:54.0px;top:1059.1px;font-size:11.8px;color:#e6e6e6;">View</span>
<span class="t" style="left:95.5px;top:1059.1px;font-size:11.8px;color:#e6e6e6;">Marker</span>
<span class="t" style="left:152.2px;top:1059.1px;font-size:11.8px;color:#e6e6e6;">Playback</span>
<span class="t tc" style="left:973.4px;width:600px;top:1059.1px;font-size:11.8px;color:#e6e6e6;">2</span>
<span class="t" style="left:1352.3px;top:1059.1px;font-size:11.8px;color:#e6e6e6;">Start</span>
<span class="t" style="right:506.4px;top:1059.1px;font-size:11.8px;color:#e6e6e6;">1</span>
<span class="t" style="left:1441.3px;top:1059.1px;font-size:11.8px;color:#e6e6e6;">End</span>
<span class="t" style="right:420.1px;top:1059.1px;font-size:11.8px;color:#e6e6e6;">250</span>
<span class="t tc" style="left:-175.0px;width:600px;top:1083.8px;font-size:11.8px;color:#a0a0a0;">12</span>
<span class="t tc" style="left:-104.8px;width:600px;top:1083.8px;font-size:11.8px;color:#a0a0a0;">24</span>
<span class="t tc" style="left:-34.6px;width:600px;top:1083.8px;font-size:11.8px;color:#a0a0a0;">36</span>
<span class="t tc" style="left:35.6px;width:600px;top:1083.8px;font-size:11.8px;color:#a0a0a0;">48</span>
<span class="t tc" style="left:105.8px;width:600px;top:1083.8px;font-size:11.8px;color:#a0a0a0;">60</span>
<span class="t tc" style="left:176.0px;width:600px;top:1083.8px;font-size:11.8px;color:#a0a0a0;">72</span>
<span class="t tc" style="left:246.2px;width:600px;top:1083.8px;font-size:11.8px;color:#a0a0a0;">84</span>
<span class="t tc" style="left:316.4px;width:600px;top:1083.8px;font-size:11.8px;color:#a0a0a0;">96</span>
<span class="t tc" style="left:386.6px;width:600px;top:1083.8px;font-size:11.8px;color:#a0a0a0;">108</span>
<span class="t tc" style="left:456.8px;width:600px;top:1083.8px;font-size:11.8px;color:#a0a0a0;">120</span>
<span class="t tc" style="left:527.0px;width:600px;top:1083.8px;font-size:11.8px;color:#a0a0a0;">132</span>
<span class="t tc" style="left:597.2px;width:600px;top:1083.8px;font-size:11.8px;color:#a0a0a0;">144</span>
<span class="t tc" style="left:667.4px;width:600px;top:1083.8px;font-size:11.8px;color:#a0a0a0;">156</span>
<span class="t tc" style="left:737.6px;width:600px;top:1083.8px;font-size:11.8px;color:#a0a0a0;">168</span>
<span class="t tc" style="left:807.8px;width:600px;top:1083.8px;font-size:11.8px;color:#a0a0a0;">180</span>
<span class="t tc" style="left:878.0px;width:600px;top:1083.8px;font-size:11.8px;color:#a0a0a0;">192</span>
<span class="t tc" style="left:948.2px;width:600px;top:1083.8px;font-size:11.8px;color:#a0a0a0;">204</span>
<span class="t tc" style="left:1018.4px;width:600px;top:1083.8px;font-size:11.8px;color:#a0a0a0;">216</span>
<span class="t tc" style="left:1088.6px;width:600px;top:1083.8px;font-size:11.8px;color:#a0a0a0;">228</span>
<span class="t tc" style="left:1158.8px;width:600px;top:1083.8px;font-size:11.8px;color:#a0a0a0;">240</span>
<span class="t tc" style="left:1229.0px;width:600px;top:1083.8px;font-size:11.8px;color:#a0a0a0;">252</span>
<span class="t tc" style="left:-233.5px;width:600px;top:1083.8px;font-size:11.8px;color:#ffffff;">2</span>
<span class="t" style="left:20.0px;top:1136.8px;font-size:11.8px;color:#b0b0b0;">Pan View</span>
<span class="t" style="right:10.0px;top:1136.8px;font-size:11.8px;color:#9a9a9a;">5.0.1</span></body></html>
